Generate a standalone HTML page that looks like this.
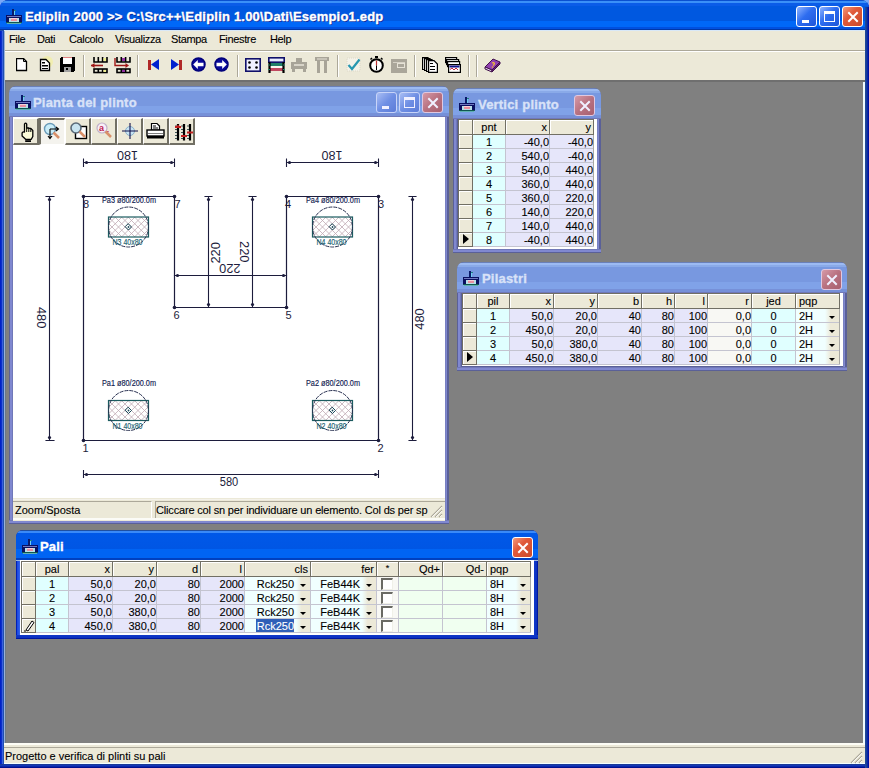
<!DOCTYPE html><html><head><meta charset="utf-8"><style>
html,body{margin:0;padding:0}
div{-webkit-text-stroke:0.1px currentColor}
body{width:869px;height:768px;overflow:hidden;position:relative;background:#7aa8f8;font-family:'Liberation Sans', sans-serif}
</style></head><body>
<div style="position:absolute;left:0px;top:0px;width:869px;height:768px;background:linear-gradient(90deg,#0020c8 0px,#0020c8 1px,#0a30c8 1px,#0a30c8 2px,#3a60e0 2px,#3a60e0 3px,#2050b0 3px,#2050b0 4px,#98b0d8 4px,#98b0d8 5px,#204898 5px,#204898 865px,#183c98 866px,#0828a8 867px,#0010a0 868px);border-radius:8px 8px 0 0"></div>
<div style="position:absolute;left:0px;top:764px;width:869px;height:4px;background:linear-gradient(#1a3a98 0px,#1a3a98 1px,#1438b8 1px,#1438b8 2px,#0a28a8 2px,#0a28a8 3px,#001090 3px)"></div>
<div style="position:absolute;left:0px;top:0px;width:869px;height:31px;background:linear-gradient(#0a50d0 0px,#0a50d0 1px,#3a90f8 1px,#3a90f8 3px,#0a5ce8 3px,#0a5ce8 6px,#0058e0 6px,#0058e0 21px,#0068f8 21px,#0068f8 27px,#0050e0 27px,#0050e0 29px,#0038a8 29px,#0038a8 30px,#2050b0 30px);border-radius:8px 8px 0 0"></div>
<div style="position:absolute;left:865px;top:7px;width:4px;height:761px;background:linear-gradient(90deg,#204898 0px,#204898 1px,#183c98 1px,#183c98 2px,#0828a8 2px,#0828a8 3px,#0010a0 3px)"></div>
<div style="position:absolute;left:4px;top:30px;width:861px;height:1px;background:#d8e8f8"></div>
<svg style="position:absolute;left:6px;top:9px" width="16" height="15" viewBox="0 0 16 15" shape-rendering="crispEdges">
<rect x="6" y="0" width="2" height="6" fill="#0a1a6a"/><rect x="8" y="1" width="1" height="5" fill="#70d0f0"/><rect x="8" y="1" width="2" height="1" fill="#208080"/>
<rect x="0" y="6" width="16" height="3" fill="#0a1060"/><rect x="1" y="7" width="14" height="1" fill="#7078c0"/>
<rect x="0" y="9" width="3" height="5" fill="#0a1060"/><rect x="13" y="9" width="3" height="5" fill="#0a1060"/>
<rect x="3" y="9" width="10" height="4" fill="#b8e0e8"/><rect x="5" y="9" width="6" height="3" fill="#e890a0"/><rect x="5" y="9" width="6" height="1" fill="#f8d0d8"/>
<rect x="0" y="13" width="16" height="1" fill="#105850"/><rect x="1" y="14" width="14" height="1" fill="#60b0b0"/>
</svg>
<div style="position:absolute;left:25px;top:8px;white-space:nowrap;font:bold 13px 'Liberation Sans', sans-serif;color:#fff;line-height:18px;letter-spacing:0.2px;-webkit-text-stroke:0.35px #fff;text-shadow:1px 1px 0 #0a2a9a">Ediplin 2000 &gt;&gt; C:\Src++\Ediplin 1.00\Dati\Esempio1.edp</div>
<div style="position:absolute;left:796px;top:6px;width:19px;height:19px;border:1px solid #fff;border-radius:3px;background:linear-gradient(135deg,#8fb4ff 0%,#2e6df0 45%,#1e55d8 100%);overflow:hidden"><div style="position:absolute;left:5px;top:13px;width:7px;height:3px;background:#fff"></div></div>
<div style="position:absolute;left:819px;top:6px;width:19px;height:19px;border:1px solid #fff;border-radius:3px;background:linear-gradient(135deg,#8fb4ff 0%,#2e6df0 45%,#1e55d8 100%);overflow:hidden"><div style="position:absolute;left:4px;top:4px;width:9px;height:7px;border:1px solid #fff;border-top-width:3px"></div></div>
<div style="position:absolute;left:842px;top:6px;width:19px;height:19px;border:1px solid #fff;border-radius:3px;background:linear-gradient(135deg,#f39a7c 0%,#e0593a 40%,#c94a2b 100%);overflow:hidden"><svg style="position:absolute;left:0;top:0" width="21" height="21"><path d="M6 6 L14 14 M14 6 L6 14" stroke="#fff" stroke-width="2" stroke-linecap="square"/></svg></div>
<div style="position:absolute;left:4px;top:31px;width:861px;height:19px;background:#ece9d8"></div>
<div style="position:absolute;left:9px;top:32px;white-space:nowrap;font:11px 'Liberation Sans', sans-serif;color:#000;line-height:14px;letter-spacing:-0.35px">File</div>
<div style="position:absolute;left:37px;top:32px;white-space:nowrap;font:11px 'Liberation Sans', sans-serif;color:#000;line-height:14px;letter-spacing:-0.35px">Dati</div>
<div style="position:absolute;left:69px;top:32px;white-space:nowrap;font:11px 'Liberation Sans', sans-serif;color:#000;line-height:14px;letter-spacing:-0.35px">Calcolo</div>
<div style="position:absolute;left:115px;top:32px;white-space:nowrap;font:11px 'Liberation Sans', sans-serif;color:#000;line-height:14px;letter-spacing:-0.35px">Visualizza</div>
<div style="position:absolute;left:171px;top:32px;white-space:nowrap;font:11px 'Liberation Sans', sans-serif;color:#000;line-height:14px;letter-spacing:-0.35px">Stampa</div>
<div style="position:absolute;left:219px;top:32px;white-space:nowrap;font:11px 'Liberation Sans', sans-serif;color:#000;line-height:14px;letter-spacing:-0.35px">Finestre</div>
<div style="position:absolute;left:270px;top:32px;white-space:nowrap;font:11px 'Liberation Sans', sans-serif;color:#000;line-height:14px;letter-spacing:-0.35px">Help</div>
<div style="position:absolute;left:4px;top:50px;width:861px;height:1px;background:#aca899"></div>
<div style="position:absolute;left:4px;top:51px;width:861px;height:1px;background:#fff"></div>
<div style="position:absolute;left:4px;top:52px;width:861px;height:28px;background:#ece9d8"></div>
<svg style="position:absolute;left:16px;top:58px" width="12" height="14" viewBox="0 0 12 14"><path d="M0.5 0.5 H7.5 L10.5 3.5 V12.5 H0.5 Z" fill="#fff" stroke="#000" stroke-width="1.3"/><path d="M7.5 0.5 V3.5 H10.5" fill="none" stroke="#000"/></svg>
<svg style="position:absolute;left:36px;top:56px" width="18" height="18" viewBox="0 0 18 18"><circle cx="11" cy="6" r="6" fill="#f4f0a0" opacity="0.7"/><path d="M4.5 3.5 H10 L13.5 7 V14.5 H4.5 Z" fill="#fff" stroke="#000" stroke-width="1.3"/><rect x="6" y="6" width="3" height="1.5" fill="#000"/><rect x="6" y="9" width="6" height="1.5" fill="#000"/><rect x="6" y="12" width="6" height="1" fill="#000"/></svg>
<svg style="position:absolute;left:60px;top:57px" width="15" height="15" viewBox="0 0 15 15" shape-rendering="crispEdges"><rect x="0" y="0" width="15" height="15" rx="2" fill="#000"/><rect x="3" y="0" width="9" height="1" fill="#e08080"/><rect x="3" y="1" width="9" height="6" fill="#fff"/><rect x="4" y="10" width="7" height="5" fill="#a0a0a0"/><rect x="6" y="11" width="2" height="2" fill="#000"/></svg>
<div style="position:absolute;left:83px;top:55px;width:1px;height:22px;background:#aca899"></div><div style="position:absolute;left:84px;top:55px;width:1px;height:22px;background:#fff"></div>
<svg style="position:absolute;left:91px;top:57px" width="17" height="17" viewBox="0 0 17 17"><g fill="none" stroke="#000" stroke-width="1.6"><path d="M3 0 V5 H16 V0 M7.3 0 V5 M11.6 0 V5"/><rect x="3" y="12" width="13" height="3.5"/><path d="M7.3 12 V15.5 M11.6 12 V15.5"/></g><rect x="12.5" y="1" width="2.5" height="3" fill="#f0f090"/><rect x="12.5" y="13" width="2.5" height="2" fill="#f0f090"/><path d="M0 8.5 H12" stroke="#a01818" stroke-width="1.6"/><path d="M0 8.5 L3.5 6 V11 Z" fill="#a01818"/></svg>
<svg style="position:absolute;left:114px;top:57px" width="17" height="17" viewBox="0 0 17 17"><g fill="none" stroke="#000" stroke-width="1.6"><path d="M3 0 V5 H16 V0 M7.3 0 V5 M11.6 0 V5"/><rect x="3" y="12" width="13" height="3.5"/><path d="M7.3 12 V15.5 M11.6 12 V15.5"/></g><rect x="8" y="1" width="3" height="3" fill="#9030a0"/><rect x="8" y="13" width="3" height="2" fill="#9030a0"/><path d="M1 1 V8.5 H12" stroke="#a01818" stroke-width="1.4" fill="none"/><path d="M15 8.5 L11.5 6 V11 Z" fill="#a01818"/></svg>
<div style="position:absolute;left:137px;top:55px;width:1px;height:22px;background:#aca899"></div><div style="position:absolute;left:138px;top:55px;width:1px;height:22px;background:#fff"></div>
<svg style="position:absolute;left:148px;top:59px" width="12" height="12" viewBox="0 0 12 12"><rect x="0" y="1" width="3" height="10" fill="#b02828"/><path d="M3 5.5 L11 0 V11 Z" fill="#0020d0"/></svg>
<svg style="position:absolute;left:171px;top:59px" width="12" height="12" viewBox="0 0 12 12"><rect x="8" y="1" width="3" height="10" fill="#b02828"/><path d="M8 5.5 L0 0 V11 Z" fill="#0020d0"/></svg>
<svg style="position:absolute;left:191px;top:57px" width="15" height="15" viewBox="0 0 15 15"><circle cx="7.5" cy="7.5" r="6.5" fill="#0a0a9a" stroke="#00007a" stroke-width="1.5"/><path d="M2.2 7.5 L6.8 3 V5.8 H12.5 V9.2 H6.8 V12 Z" fill="#fff"/></svg>
<svg style="position:absolute;left:214px;top:57px" width="15" height="15" viewBox="0 0 15 15"><circle cx="7.5" cy="7.5" r="6.5" fill="#0a0a9a" stroke="#00007a" stroke-width="1.5"/><path d="M12.8 7.5 L8.2 3 V5.8 H2.5 V9.2 H8.2 V12 Z" fill="#fff"/></svg>
<div style="position:absolute;left:237px;top:55px;width:1px;height:22px;background:#aca899"></div><div style="position:absolute;left:238px;top:55px;width:1px;height:22px;background:#fff"></div>
<svg style="position:absolute;left:245px;top:58px" width="16" height="14" viewBox="0 0 16 14"><rect x="0.8" y="0.8" width="14.4" height="12.4" fill="#f0f0ff" stroke="#10106a" stroke-width="1.6"/><circle cx="4.5" cy="4.5" r="1.3" fill="#000"/><circle cx="11.5" cy="4.5" r="1.3" fill="#000"/><circle cx="4.5" cy="9.5" r="1.3" fill="#000"/><circle cx="11.5" cy="9.5" r="1.3" fill="#000"/></svg>
<svg style="position:absolute;left:268px;top:57px" width="17" height="16" viewBox="0 0 17 16"><rect x="2" y="6" width="13" height="3" fill="#208068"/><rect x="2" y="11" width="13" height="3" fill="#c04860"/><rect x="2" y="9" width="13" height="2" fill="#f8f8f0"/><rect x="0.8" y="0.8" width="15.4" height="4.4" fill="#e8ecff" stroke="#10106a" stroke-width="1.6"/><path d="M1.5 5 V16 M15.5 5 V16" stroke="#000" stroke-width="2.2"/><path d="M0 8 H2 M15 8 H17 M0 12.5 H2 M15 12.5 H17" stroke="#208068" stroke-width="1"/></svg>
<svg style="position:absolute;left:291px;top:58px" width="16" height="14" viewBox="0 0 16 14" shape-rendering="crispEdges"><g fill="#a8a498"><rect x="5" y="0" width="6" height="4"/><rect x="0" y="4" width="16" height="7" rx="1"/><rect x="1" y="10" width="3" height="4"/><rect x="12" y="10" width="3" height="4"/></g><rect x="3" y="6" width="10" height="2" fill="#d8d4c8"/></svg>
<svg style="position:absolute;left:315px;top:57px" width="14" height="16" viewBox="0 0 14 16" shape-rendering="crispEdges"><g fill="#a8a498"><rect x="0" y="0" width="14" height="4"/><rect x="2" y="4" width="3" height="12"/><rect x="9" y="4" width="3" height="12"/></g><rect x="2" y="1" width="10" height="2" fill="#c8c4b8"/></svg>
<div style="position:absolute;left:337px;top:55px;width:1px;height:22px;background:#aca899"></div><div style="position:absolute;left:338px;top:55px;width:1px;height:22px;background:#fff"></div>
<svg style="position:absolute;left:346px;top:57px" width="15" height="15" viewBox="0 0 15 15"><rect x="1" y="1" width="13" height="13" fill="#f4f2e8" stroke="#dcd8c8" stroke-dasharray="1 1"/><path d="M2.5 8 L6 12 L13.5 2.5" fill="none" stroke="#2898b0" stroke-width="2.2"/></svg>
<svg style="position:absolute;left:368px;top:56px" width="17" height="17" viewBox="0 0 17 17"><rect x="7" y="0" width="3" height="2" fill="#000"/><path d="M2.5 3.5 L4 2 M14.5 3.5 L13 2" stroke="#000" stroke-width="1.5"/><circle cx="8.5" cy="9.5" r="6.3" fill="#fff" stroke="#000" stroke-width="2"/><path d="M8.5 9.5 V4.5" stroke="#c03030" stroke-width="1.2"/><path d="M8.5 9.5 V14" stroke="#000" stroke-width="1"/></svg>
<svg style="position:absolute;left:391px;top:59px" width="16" height="14" viewBox="0 0 16 14" shape-rendering="crispEdges"><rect x="0" y="0" width="16" height="14" fill="#aaa69a"/><rect x="6" y="4" width="8" height="5" fill="#e6e2d6"/><rect x="7" y="5" width="6" height="3" fill="#aaa69a"/><rect x="2" y="3" width="12" height="1" fill="#d6d2c6"/></svg>
<div style="position:absolute;left:414px;top:55px;width:1px;height:22px;background:#aca899"></div><div style="position:absolute;left:415px;top:55px;width:1px;height:22px;background:#fff"></div>
<svg style="position:absolute;left:422px;top:57px" width="16" height="16" viewBox="0 0 16 16"><g stroke="#000" stroke-width="1.2" fill="#fff"><path d="M0.6 0.6 H6 V12.5 H0.6 Z"/><path d="M2.6 1.6 H8 V13.5 H2.6 Z"/><path d="M4.6 2.6 H10 V14.5 H4.6 Z"/><path d="M6.6 3.6 H12 L15.4 7 V15.4 H6.6 Z"/></g><rect x="8" y="6" width="3" height="1" fill="#000"/><rect x="8" y="9" width="5" height="1" fill="#000"/><rect x="8" y="12" width="5" height="1" fill="#000"/></svg>
<svg style="position:absolute;left:445px;top:57px" width="16" height="16" viewBox="0 0 16 16"><g stroke="#000" stroke-width="1.2" fill="#fff"><rect x="0.6" y="0.6" width="11" height="5"/><rect x="1.6" y="2.6" width="12" height="5"/><rect x="2.6" y="4.6" width="12" height="5"/><rect x="3.6" y="7.6" width="11.8" height="7.8"/></g><rect x="4.5" y="8.5" width="10" height="2" fill="#10108a"/><path d="M5 12.5 L7 11 L9 13 L11 11 L13 13" stroke="#c02040" stroke-width="1" fill="none"/></svg>
<div style="position:absolute;left:468px;top:55px;width:1px;height:22px;background:#aca899"></div><div style="position:absolute;left:469px;top:55px;width:1px;height:22px;background:#fff"></div>
<div style="position:absolute;left:476px;top:55px;width:1px;height:22px;background:#aca899"></div><div style="position:absolute;left:477px;top:55px;width:1px;height:22px;background:#fff"></div>
<svg style="position:absolute;left:484px;top:57px" width="17" height="16" viewBox="0 0 17 16"><path d="M1 10 L9 2 L16 5 L8 13 Z" fill="#9040b0" stroke="#40104a" stroke-width="1"/><path d="M1 10 L8 13 L8 15 L1 12 Z" fill="#e8d8f0" stroke="#40104a" stroke-width="1"/><path d="M8 13 L16 5 V7 L8 15 Z" fill="#6a2080" stroke="#40104a" stroke-width="1"/><path d="M8 6 Q10 5 10.5 6.5 Q10 8 9 8.5" stroke="#f0c030" stroke-width="1.2" fill="none"/><circle cx="8.5" cy="10" r="0.8" fill="#f0c030"/></svg>
<div style="position:absolute;left:4px;top:80px;width:861px;height:665px;background:#808080"></div>
<div style="position:absolute;left:4px;top:80px;width:861px;height:2px;background:#6f6f6f"></div>
<div style="position:absolute;left:4px;top:31px;width:1px;height:733px;background:#98b0d8"></div>
<div style="position:absolute;left:5px;top:82px;width:1px;height:661px;background:#6a7888"></div>
<div style="position:absolute;left:863px;top:82px;width:2px;height:682px;background:#f0fcff"></div>
<div style="position:absolute;left:4px;top:743px;width:861px;height:2px;background:#fdfdf6"></div>
<div style="position:absolute;left:4px;top:745px;width:861px;height:19px;background:#ece9d8"></div>
<div style="position:absolute;left:4px;top:747px;width:861px;height:1px;background:#aca899"></div>
<div style="position:absolute;left:4px;top:763px;width:861px;height:1px;background:#f4ffff"></div>
<svg style="position:absolute;left:850px;top:751px" width="13" height="13"><path d="M12 1 L1 12 M12 5 L5 12 M12 9 L9 12" stroke="#aca899" stroke-width="1.2"/><path d="M12 2 L2 12 M12 6 L6 12 M12 10 L10 12" stroke="#fff" stroke-width="0.8"/></svg>
<div style="position:absolute;left:5px;top:749px;white-space:nowrap;font:11px 'Liberation Sans', sans-serif;color:#000;line-height:14px;letter-spacing:-0.01px">Progetto e verifica di plinti su pali</div>
<div style="position:absolute;left:9px;top:86px;width:440px;height:438px;background:#5a6098;border-radius:7px 7px 0 0"></div>
<div style="position:absolute;left:9px;top:117px;width:4px;height:407px;background:linear-gradient(90deg,#5a6098 0px,#5a6098 1px,#8088d0 1px,#8088d0 3px,#7078b8 3px)"></div>
<div style="position:absolute;left:445px;top:117px;width:4px;height:407px;background:linear-gradient(270deg,#5a6098 0px,#5a6098 2px,#8088d0 2px,#8088d0 3px,#7880c0 3px)"></div>
<div style="position:absolute;left:9px;top:520px;width:440px;height:4px;background:linear-gradient(0deg,#5a6098 0px,#5a6098 1px,#8088d0 1px,#8088d0 3px,#7078b8 3px)"></div>
<div style="position:absolute;left:9px;top:86px;width:440px;height:31px;background:linear-gradient(#6a80b8 0px,#6a80b8 1px,#9cbaf2 1px,#9cbaf2 3px,#8aaae8 3px,#8aaae8 5px,#7898e0 5px,#7898e0 20px,#80a2e8 20px,#80a2e8 27px,#7690d8 27px,#7690d8 30px,#7078b8 30px,#7078b8 31px);border-radius:7px 7px 0 0"></div>
<svg style="position:absolute;left:15px;top:95px" width="16" height="15" viewBox="0 0 16 15" shape-rendering="crispEdges">
<rect x="6" y="0" width="2" height="6" fill="#0a1a6a"/><rect x="8" y="1" width="1" height="5" fill="#70d0f0"/><rect x="8" y="1" width="2" height="1" fill="#208080"/>
<rect x="0" y="6" width="16" height="3" fill="#0a1060"/><rect x="1" y="7" width="14" height="1" fill="#7078c0"/>
<rect x="0" y="9" width="3" height="5" fill="#0a1060"/><rect x="13" y="9" width="3" height="5" fill="#0a1060"/>
<rect x="3" y="9" width="10" height="4" fill="#b8e0e8"/><rect x="5" y="9" width="6" height="3" fill="#e890a0"/><rect x="5" y="9" width="6" height="1" fill="#f8d0d8"/>
<rect x="0" y="13" width="16" height="1" fill="#105850"/><rect x="1" y="14" width="14" height="1" fill="#60b0b0"/>
</svg>
<div style="position:absolute;left:33px;top:94px;white-space:nowrap;font:bold 13px 'Liberation Sans', sans-serif;color:#d8e2f8;line-height:18px;-webkit-text-stroke:0.35px #d8e2f8;letter-spacing:0.2px">Pianta del plinto</div>
<div style="position:absolute;left:422px;top:92px;width:19px;height:19px;border:1px solid #e0c8e0;border-radius:3px;background:linear-gradient(135deg,#d69aa8 0%,#b87180 50%,#a86070 100%);overflow:hidden"><svg style="position:absolute;left:0;top:0" width="21" height="21"><path d="M6 6 L14 14 M14 6 L6 14" stroke="#f0f0ff" stroke-width="2" stroke-linecap="square"/></svg></div>
<div style="position:absolute;left:399px;top:92px;width:19px;height:19px;border:1px solid #c8d4f8;border-radius:3px;background:linear-gradient(135deg,#a8bdf4 0%,#6f8fe4 50%,#5c7cd8 100%);overflow:hidden"><div style="position:absolute;left:4px;top:4px;width:9px;height:7px;border:1px solid #f0f0ff;border-top-width:3px"></div></div>
<div style="position:absolute;left:376px;top:92px;width:19px;height:19px;border:1px solid #c8d4f8;border-radius:3px;background:linear-gradient(135deg,#a8bdf4 0%,#6f8fe4 50%,#5c7cd8 100%);overflow:hidden"><div style="position:absolute;left:5px;top:13px;width:7px;height:3px;background:#f0f0ff"></div></div>
<div style="position:absolute;left:13px;top:117px;width:432px;height:404px;background:#ece9d8"></div>
<div style="position:absolute;left:13px;top:117px;width:432px;height:381px;background:#fff"></div>
<div style="position:absolute;left:13px;top:118px;width:26px;height:27px;box-sizing:border-box;background:#ece9d8;border-top:1px solid #fff;border-left:1px solid #fff;border-right:2px solid #716f64;border-bottom:2px solid #716f64"></div>
<div style="position:absolute;left:39px;top:118px;width:26px;height:27px;box-sizing:border-box;background:#f4f3ee;border-top:2px solid #716f64;border-left:2px solid #716f64;border-right:1px solid #fff;border-bottom:1px solid #fff"></div>
<div style="position:absolute;left:65px;top:118px;width:26px;height:27px;box-sizing:border-box;background:#ece9d8;border-top:1px solid #fff;border-left:1px solid #fff;border-right:2px solid #716f64;border-bottom:2px solid #716f64"></div>
<div style="position:absolute;left:91px;top:118px;width:26px;height:27px;box-sizing:border-box;background:#ece9d8;border-top:1px solid #fff;border-left:1px solid #fff;border-right:2px solid #716f64;border-bottom:2px solid #716f64"></div>
<div style="position:absolute;left:117px;top:118px;width:26px;height:27px;box-sizing:border-box;background:#ece9d8;border-top:1px solid #fff;border-left:1px solid #fff;border-right:2px solid #716f64;border-bottom:2px solid #716f64"></div>
<div style="position:absolute;left:143px;top:118px;width:26px;height:27px;box-sizing:border-box;background:#ece9d8;border-top:1px solid #fff;border-left:1px solid #fff;border-right:2px solid #716f64;border-bottom:2px solid #716f64"></div>
<div style="position:absolute;left:169px;top:118px;width:26px;height:27px;box-sizing:border-box;background:#ece9d8;border-top:1px solid #fff;border-left:1px solid #fff;border-right:2px solid #716f64;border-bottom:2px solid #716f64"></div>
<svg style="position:absolute;left:20px;top:121px" width="15" height="22" viewBox="0 0 15 22"><path d="M4.5 11 V3 Q5.6 1.2 6.7 3 V7 H8.8 V7.4 H10.8 L12.8 9.5 V15.5 L11.3 18.3 H5.6 L2.1 15 V11.8 Q3 10.6 4.5 11 Z" fill="#fbfbd8" stroke="#000" stroke-width="1.3" stroke-linejoin="round"/><path d="M6.7 7 V11 M8.8 7.4 V11 M10.8 7.6 V11" stroke="#000" stroke-width="1"/><rect x="5.2" y="19.2" width="5.8" height="1.8" fill="#000"/></svg>
<svg style="position:absolute;left:43px;top:122px" width="20" height="20" viewBox="0 0 20 20"><circle cx="7" cy="7" r="5.5" fill="#c8ecf8" stroke="#6a9ab8" stroke-width="1.4"/><path d="M10.5 10.5 L16 16" stroke="#d8906a" stroke-width="2.5"/><path d="M7 7 H15 M13 5 L15.5 7 L13 9" stroke="#000" stroke-width="1.1" fill="none"/><path d="M7 7 V16 M5 14 L7 16.5 L9 14" stroke="#000" stroke-width="1.1" fill="none"/></svg>
<svg style="position:absolute;left:70px;top:122px" width="18" height="18" viewBox="0 0 18 18"><rect x="5.5" y="4.5" width="11" height="12" fill="#fff" stroke="#000" stroke-width="1.4"/><circle cx="6" cy="6" r="5" fill="#c8e4f0" stroke="#5a6a78" stroke-width="1.6"/><path d="M9.5 9.5 L15 15" stroke="#d8906a" stroke-width="2.5"/></svg>
<svg style="position:absolute;left:96px;top:122px" width="18" height="18" viewBox="0 0 18 18"><circle cx="6" cy="6" r="5" fill="#f8f0f8" stroke="#c0b0c8" stroke-width="1.2"/><text x="3" y="9" font-family="Liberation Sans" font-size="9" font-weight="bold" fill="#c02050">a</text><text x="10" y="12" font-family="Liberation Sans" font-size="6" font-weight="bold" fill="#c02050">z</text><path d="M9.5 9.5 L15 15" stroke="#d8906a" stroke-width="2.5"/></svg>
<svg style="position:absolute;left:121px;top:122px" width="18" height="18" viewBox="0 0 18 18"><circle cx="9" cy="9" r="4.5" fill="#c8e4f4" stroke="#8ab0c8" stroke-width="1"/><path d="M9 1 V17 M1 9 H17" stroke="#10104a" stroke-width="1.1"/></svg>
<svg style="position:absolute;left:146px;top:122px" width="20" height="18" viewBox="0 0 20 18"><path d="M5.5 1.5 H11 L13.5 4 V8 H5.5 Z" fill="#fff" stroke="#000" stroke-width="1.2"/><path d="M7 4 H10 M7 6 H12" stroke="#000"/><rect x="1" y="8" width="17" height="6" fill="#fff" stroke="#000" stroke-width="1.4"/><rect x="2" y="11" width="15" height="1" fill="#808080"/><rect x="1" y="14" width="17" height="2.5" fill="#000"/></svg>
<svg style="position:absolute;left:171px;top:121px" width="24" height="22" viewBox="0 0 24 22"><path d="M4 5 H6 M4 8.5 H6 M4 11.5 H6 M4 14.5 H6 M4 17.5 H6 M10 5 H12 M10 8.5 H12 M10 11.5 H12 M10 14.5 H12 M10 17.5 H12 M16 5 H18 M16 8.5 H18 M16 11.5 H18 M16 14.5 H18 M16 17.5 H18" stroke="#405858" stroke-width="1"/><path d="M7 3 V19.5 M13 3 V19.5 M19 3 V19.5" stroke="#000" stroke-width="2.2"/><path d="M4 6 H10 M10 15 H16 M16 11.5 H22" stroke="#c02020" stroke-width="2"/><path d="M7 3.5 L5 6 H9 Z" fill="#c02020"/></svg>
<div style="position:absolute;left:13px;top:498px;width:432px;height:22px;background:#ece9d8"></div>
<div style="position:absolute;left:13px;top:499px;width:432px;height:1px;background:#f4f2ea"></div>
<div style="position:absolute;left:13px;top:501px;width:139px;height:17px;border-top:1px solid #aca899;border-left:0;border-right:1px solid #fff;box-sizing:border-box"></div>
<div style="position:absolute;left:155px;top:501px;width:290px;height:17px;border-top:1px solid #aca899;border-left:1px solid #aca899;box-sizing:border-box"></div>
<div style="position:absolute;left:13px;top:518px;width:432px;height:2px;background:#fbfbf6"></div>
<div style="position:absolute;left:15px;top:503px;white-space:nowrap;font:11px 'Liberation Sans', sans-serif;color:#000;line-height:14px">Zoom/Sposta</div>
<div style="position:absolute;left:156px;top:503px;white-space:nowrap;font:11px 'Liberation Sans', sans-serif;color:#000;line-height:14px;letter-spacing:-0.17px">Cliccare col sn per individuare un elemento. Col ds per sp</div>
<svg style="position:absolute;left:430px;top:505px" width="13" height="13"><path d="M12 1 L1 12 M12 5 L5 12 M12 9 L9 12" stroke="#aca899" stroke-width="1.2"/><path d="M12 2 L2 12 M12 6 L6 12 M12 10 L10 12" stroke="#fff" stroke-width="0.8"/></svg>
<svg style="position:absolute;left:13px;top:145px" width="432" height="353" viewBox="13 145 432 353">
<g stroke-linecap="square">
<clipPath id="c128227"><rect x="108.5" y="217" width="40" height="20"/></clipPath>
<path d="M82.5 217 L102.5 237 M102.5 217 L82.5 237 M89.0 217 L109.0 237 M109.0 217 L89.0 237 M95.5 217 L115.5 237 M115.5 217 L95.5 237 M102.0 217 L122.0 237 M122.0 217 L102.0 237 M108.5 217 L128.5 237 M128.5 217 L108.5 237 M115.0 217 L135.0 237 M135.0 217 L115.0 237 M121.5 217 L141.5 237 M141.5 217 L121.5 237 M128.0 217 L148.0 237 M148.0 217 L128.0 237 M134.5 217 L154.5 237 M154.5 217 L134.5 237 M141.0 217 L161.0 237 M161.0 217 L141.0 237 M147.5 217 L167.5 237 M167.5 217 L147.5 237 M154.0 217 L174.0 237 M174.0 217 L154.0 237 M160.5 217 L180.5 237 M180.5 217 L160.5 237 M167.0 217 L187.0 237 M187.0 217 L167.0 237 M173.5 217 L193.5 237 M193.5 217 L173.5 237 M180.0 217 L200.0 237 M200.0 217 L180.0 237" stroke="#c0aab4" stroke-width="0.8" clip-path="url(#c128227)" fill="none"/>
<rect x="108.5" y="217" width="40" height="20" fill="none" stroke="#1c5c60" stroke-width="1.2"/>
<circle cx="128.5" cy="227" r="20" fill="none" stroke="#283050" stroke-width="1" stroke-dasharray="3 2"/>
<path d="M128.5 224 L131.5 227 L128.5 230 L125.5 227 Z" fill="none" stroke="#1c4a5a" stroke-width="1"/><circle cx="128.5" cy="227" r="0.9" fill="#1c4a5a"/>
<text x="129.0" y="202.5" text-anchor="middle" font-family="Liberation Sans" font-size="8.5" fill="#102050" stroke="#102050" stroke-width="0.15" textLength="54" lengthAdjust="spacingAndGlyphs">Pa3 ø80/200.0m</text>
<text x="127.5" y="245" text-anchor="middle" font-family="Liberation Sans" font-size="8.5" fill="#186070" stroke="#186070" stroke-width="0.15" textLength="30" lengthAdjust="spacingAndGlyphs">N3 40x80</text>
<clipPath id="c332227"><rect x="312.5" y="217" width="40" height="20"/></clipPath>
<path d="M286.5 217 L306.5 237 M306.5 217 L286.5 237 M293.0 217 L313.0 237 M313.0 217 L293.0 237 M299.5 217 L319.5 237 M319.5 217 L299.5 237 M306.0 217 L326.0 237 M326.0 217 L306.0 237 M312.5 217 L332.5 237 M332.5 217 L312.5 237 M319.0 217 L339.0 237 M339.0 217 L319.0 237 M325.5 217 L345.5 237 M345.5 217 L325.5 237 M332.0 217 L352.0 237 M352.0 217 L332.0 237 M338.5 217 L358.5 237 M358.5 217 L338.5 237 M345.0 217 L365.0 237 M365.0 217 L345.0 237 M351.5 217 L371.5 237 M371.5 217 L351.5 237 M358.0 217 L378.0 237 M378.0 217 L358.0 237 M364.5 217 L384.5 237 M384.5 217 L364.5 237 M371.0 217 L391.0 237 M391.0 217 L371.0 237 M377.5 217 L397.5 237 M397.5 217 L377.5 237 M384.0 217 L404.0 237 M404.0 217 L384.0 237" stroke="#c0aab4" stroke-width="0.8" clip-path="url(#c332227)" fill="none"/>
<rect x="312.5" y="217" width="40" height="20" fill="none" stroke="#1c5c60" stroke-width="1.2"/>
<circle cx="332.5" cy="227" r="20" fill="none" stroke="#283050" stroke-width="1" stroke-dasharray="3 2"/>
<path d="M332.5 224 L335.5 227 L332.5 230 L329.5 227 Z" fill="none" stroke="#1c4a5a" stroke-width="1"/><circle cx="332.5" cy="227" r="0.9" fill="#1c4a5a"/>
<text x="333.0" y="202.5" text-anchor="middle" font-family="Liberation Sans" font-size="8.5" fill="#102050" stroke="#102050" stroke-width="0.15" textLength="54" lengthAdjust="spacingAndGlyphs">Pa4 ø80/200.0m</text>
<text x="331.5" y="245" text-anchor="middle" font-family="Liberation Sans" font-size="8.5" fill="#186070" stroke="#186070" stroke-width="0.15" textLength="30" lengthAdjust="spacingAndGlyphs">N4 40x80</text>
<clipPath id="c128410"><rect x="108.5" y="400.5" width="40" height="20"/></clipPath>
<path d="M82.5 400.5 L102.5 420.5 M102.5 400.5 L82.5 420.5 M89.0 400.5 L109.0 420.5 M109.0 400.5 L89.0 420.5 M95.5 400.5 L115.5 420.5 M115.5 400.5 L95.5 420.5 M102.0 400.5 L122.0 420.5 M122.0 400.5 L102.0 420.5 M108.5 400.5 L128.5 420.5 M128.5 400.5 L108.5 420.5 M115.0 400.5 L135.0 420.5 M135.0 400.5 L115.0 420.5 M121.5 400.5 L141.5 420.5 M141.5 400.5 L121.5 420.5 M128.0 400.5 L148.0 420.5 M148.0 400.5 L128.0 420.5 M134.5 400.5 L154.5 420.5 M154.5 400.5 L134.5 420.5 M141.0 400.5 L161.0 420.5 M161.0 400.5 L141.0 420.5 M147.5 400.5 L167.5 420.5 M167.5 400.5 L147.5 420.5 M154.0 400.5 L174.0 420.5 M174.0 400.5 L154.0 420.5 M160.5 400.5 L180.5 420.5 M180.5 400.5 L160.5 420.5 M167.0 400.5 L187.0 420.5 M187.0 400.5 L167.0 420.5 M173.5 400.5 L193.5 420.5 M193.5 400.5 L173.5 420.5 M180.0 400.5 L200.0 420.5 M200.0 400.5 L180.0 420.5" stroke="#c0aab4" stroke-width="0.8" clip-path="url(#c128410)" fill="none"/>
<rect x="108.5" y="400.5" width="40" height="20" fill="none" stroke="#1c5c60" stroke-width="1.2"/>
<circle cx="128.5" cy="410.5" r="20" fill="none" stroke="#283050" stroke-width="1" stroke-dasharray="3 2"/>
<path d="M128.5 407.5 L131.5 410.5 L128.5 413.5 L125.5 410.5 Z" fill="none" stroke="#1c4a5a" stroke-width="1"/><circle cx="128.5" cy="410.5" r="0.9" fill="#1c4a5a"/>
<text x="129.0" y="386.0" text-anchor="middle" font-family="Liberation Sans" font-size="8.5" fill="#102050" stroke="#102050" stroke-width="0.15" textLength="54" lengthAdjust="spacingAndGlyphs">Pa1 ø80/200.0m</text>
<text x="127.5" y="428.5" text-anchor="middle" font-family="Liberation Sans" font-size="8.5" fill="#186070" stroke="#186070" stroke-width="0.15" textLength="30" lengthAdjust="spacingAndGlyphs">N1 40x80</text>
<clipPath id="c332410"><rect x="312.5" y="400.5" width="40" height="20"/></clipPath>
<path d="M286.5 400.5 L306.5 420.5 M306.5 400.5 L286.5 420.5 M293.0 400.5 L313.0 420.5 M313.0 400.5 L293.0 420.5 M299.5 400.5 L319.5 420.5 M319.5 400.5 L299.5 420.5 M306.0 400.5 L326.0 420.5 M326.0 400.5 L306.0 420.5 M312.5 400.5 L332.5 420.5 M332.5 400.5 L312.5 420.5 M319.0 400.5 L339.0 420.5 M339.0 400.5 L319.0 420.5 M325.5 400.5 L345.5 420.5 M345.5 400.5 L325.5 420.5 M332.0 400.5 L352.0 420.5 M352.0 400.5 L332.0 420.5 M338.5 400.5 L358.5 420.5 M358.5 400.5 L338.5 420.5 M345.0 400.5 L365.0 420.5 M365.0 400.5 L345.0 420.5 M351.5 400.5 L371.5 420.5 M371.5 400.5 L351.5 420.5 M358.0 400.5 L378.0 420.5 M378.0 400.5 L358.0 420.5 M364.5 400.5 L384.5 420.5 M384.5 400.5 L364.5 420.5 M371.0 400.5 L391.0 420.5 M391.0 400.5 L371.0 420.5 M377.5 400.5 L397.5 420.5 M397.5 400.5 L377.5 420.5 M384.0 400.5 L404.0 420.5 M404.0 400.5 L384.0 420.5" stroke="#c0aab4" stroke-width="0.8" clip-path="url(#c332410)" fill="none"/>
<rect x="312.5" y="400.5" width="40" height="20" fill="none" stroke="#1c5c60" stroke-width="1.2"/>
<circle cx="332.5" cy="410.5" r="20" fill="none" stroke="#283050" stroke-width="1" stroke-dasharray="3 2"/>
<path d="M332.5 407.5 L335.5 410.5 L332.5 413.5 L329.5 410.5 Z" fill="none" stroke="#1c4a5a" stroke-width="1"/><circle cx="332.5" cy="410.5" r="0.9" fill="#1c4a5a"/>
<text x="333.0" y="386.0" text-anchor="middle" font-family="Liberation Sans" font-size="8.5" fill="#102050" stroke="#102050" stroke-width="0.15" textLength="54" lengthAdjust="spacingAndGlyphs">Pa2 ø80/200.0m</text>
<text x="331.5" y="428.5" text-anchor="middle" font-family="Liberation Sans" font-size="8.5" fill="#186070" stroke="#186070" stroke-width="0.15" textLength="30" lengthAdjust="spacingAndGlyphs">N2 40x80</text>
<path d="M83.5 196.5 H174.5 V307.5 H286.5 V196.5 H378.5 V440.5 H83.5 Z" fill="none" stroke="#1c1c3c" stroke-width="1.2"/>
<circle cx="83.5" cy="196.5" r="1.8" fill="#1c1c3c"/>
<circle cx="174.5" cy="196.5" r="1.8" fill="#1c1c3c"/>
<circle cx="286.5" cy="196.5" r="1.8" fill="#1c1c3c"/>
<circle cx="378.5" cy="196.5" r="1.8" fill="#1c1c3c"/>
<circle cx="174.5" cy="307.5" r="1.8" fill="#1c1c3c"/>
<circle cx="286.5" cy="307.5" r="1.8" fill="#1c1c3c"/>
<circle cx="83.5" cy="440.5" r="1.8" fill="#1c1c3c"/>
<circle cx="378.5" cy="440.5" r="1.8" fill="#1c1c3c"/>
<text x="86" y="207.5" text-anchor="middle" font-family="Liberation Sans" font-size="11" fill="#1c1c3c">8</text>
<text x="177.5" y="207.5" text-anchor="middle" font-family="Liberation Sans" font-size="11" fill="#1c1c3c">7</text>
<text x="288" y="207.5" text-anchor="middle" font-family="Liberation Sans" font-size="11" fill="#1c1c3c">4</text>
<text x="381" y="207.5" text-anchor="middle" font-family="Liberation Sans" font-size="11" fill="#1c1c3c">3</text>
<text x="176.5" y="319" text-anchor="middle" font-family="Liberation Sans" font-size="11" fill="#1c1c3c">6</text>
<text x="288.5" y="319" text-anchor="middle" font-family="Liberation Sans" font-size="11" fill="#1c1c3c">5</text>
<text x="85.5" y="451.5" text-anchor="middle" font-family="Liberation Sans" font-size="11" fill="#1c1c3c">1</text>
<text x="380.5" y="451.5" text-anchor="middle" font-family="Liberation Sans" font-size="11" fill="#1c1c3c">2</text>
<path d="M83.5 162.5 H174.5 M83.5 159 V166.5 M174.5 159 V166.5 M286.5 162.5 H378.5 M286.5 159 V166.5 M378.5 159 V166.5 M49.5 196.5 V440.5 M46 196.5 H54 M46 440.5 H54 M412.5 196.5 V440.5 M409 196.5 H416 M409 440.5 H416 M208.5 196.5 V307.5 M205 196.5 H212 M252.5 196.5 V307.5 M249 196.5 H256 M174.5 275.5 H286.5 M83.5 474.5 H378.5 M83.5 470.5 V477.5 M378.5 470.5 V477.5" fill="none" stroke="#1c1c3c" stroke-width="1.1"/>
<circle cx="86.5" cy="162.5" r="1.6" fill="#1c1c3c"/>
<circle cx="171.5" cy="162.5" r="1.6" fill="#1c1c3c"/>
<circle cx="289.5" cy="162.5" r="1.6" fill="#1c1c3c"/>
<circle cx="375.5" cy="162.5" r="1.6" fill="#1c1c3c"/>
<circle cx="49.5" cy="199.5" r="1.6" fill="#1c1c3c"/>
<circle cx="49.5" cy="437.5" r="1.6" fill="#1c1c3c"/>
<circle cx="412.5" cy="199.5" r="1.6" fill="#1c1c3c"/>
<circle cx="412.5" cy="437.5" r="1.6" fill="#1c1c3c"/>
<circle cx="208.5" cy="199.5" r="1.6" fill="#1c1c3c"/>
<circle cx="208.5" cy="304.5" r="1.6" fill="#1c1c3c"/>
<circle cx="252.5" cy="199.5" r="1.6" fill="#1c1c3c"/>
<circle cx="252.5" cy="304.5" r="1.6" fill="#1c1c3c"/>
<circle cx="177.5" cy="275.5" r="1.6" fill="#1c1c3c"/>
<circle cx="283.5" cy="275.5" r="1.6" fill="#1c1c3c"/>
<circle cx="86.5" cy="474.5" r="1.6" fill="#1c1c3c"/>
<circle cx="375.5" cy="474.5" r="1.6" fill="#1c1c3c"/>
</g>
<text transform="translate(127.5,156.1) rotate(180)" x="0" y="4.65" text-anchor="middle" font-family="Liberation Sans" font-size="13" fill="#1c1c3c" textLength="21" lengthAdjust="spacingAndGlyphs">180</text>
<text transform="translate(332,156.1) rotate(180)" x="0" y="4.65" text-anchor="middle" font-family="Liberation Sans" font-size="13" fill="#1c1c3c" textLength="21" lengthAdjust="spacingAndGlyphs">180</text>
<text transform="translate(42,317.7) rotate(90)" x="0" y="4.83" text-anchor="middle" font-family="Liberation Sans" font-size="13.5" fill="#1c1c3c" textLength="21.5" lengthAdjust="spacingAndGlyphs">480</text>
<text transform="translate(419,319) rotate(-90)" x="0" y="4.83" text-anchor="middle" font-family="Liberation Sans" font-size="13.5" fill="#1c1c3c" textLength="21.5" lengthAdjust="spacingAndGlyphs">480</text>
<text transform="translate(215,252.8) rotate(-90)" x="0" y="4.65" text-anchor="middle" font-family="Liberation Sans" font-size="13" fill="#1c1c3c" textLength="21.5" lengthAdjust="spacingAndGlyphs">220</text>
<text transform="translate(245,251.8) rotate(90)" x="0" y="4.65" text-anchor="middle" font-family="Liberation Sans" font-size="13" fill="#1c1c3c" textLength="21.5" lengthAdjust="spacingAndGlyphs">220</text>
<text transform="translate(229.8,268.6) rotate(180)" x="0" y="4.65" text-anchor="middle" font-family="Liberation Sans" font-size="13" fill="#1c1c3c" textLength="21.5" lengthAdjust="spacingAndGlyphs">220</text>
<text transform="translate(229,481.5) rotate(0)" x="0" y="4.65" text-anchor="middle" font-family="Liberation Sans" font-size="13" fill="#1c1c3c" textLength="18.5" lengthAdjust="spacingAndGlyphs">580</text>
</svg>
<div style="position:absolute;left:453px;top:88px;width:148px;height:165px;background:#5a6098;border-radius:7px 7px 0 0"></div>
<div style="position:absolute;left:453px;top:119px;width:4px;height:134px;background:linear-gradient(90deg,#5a6098 0px,#5a6098 1px,#8088d0 1px,#8088d0 3px,#7078b8 3px)"></div>
<div style="position:absolute;left:597px;top:119px;width:4px;height:134px;background:linear-gradient(270deg,#5a6098 0px,#5a6098 2px,#8088d0 2px,#8088d0 3px,#7880c0 3px)"></div>
<div style="position:absolute;left:453px;top:249px;width:148px;height:4px;background:linear-gradient(0deg,#5a6098 0px,#5a6098 1px,#8088d0 1px,#8088d0 3px,#7078b8 3px)"></div>
<div style="position:absolute;left:453px;top:88px;width:148px;height:31px;background:linear-gradient(#6a80b8 0px,#6a80b8 1px,#9cbaf2 1px,#9cbaf2 3px,#8aaae8 3px,#8aaae8 5px,#7898e0 5px,#7898e0 20px,#80a2e8 20px,#80a2e8 27px,#7690d8 27px,#7690d8 30px,#7078b8 30px,#7078b8 31px);border-radius:7px 7px 0 0"></div>
<svg style="position:absolute;left:459px;top:97px" width="16" height="15" viewBox="0 0 16 15" shape-rendering="crispEdges">
<rect x="6" y="0" width="2" height="6" fill="#0a1a6a"/><rect x="8" y="1" width="1" height="5" fill="#70d0f0"/><rect x="8" y="1" width="2" height="1" fill="#208080"/>
<rect x="0" y="6" width="16" height="3" fill="#0a1060"/><rect x="1" y="7" width="14" height="1" fill="#7078c0"/>
<rect x="0" y="9" width="3" height="5" fill="#0a1060"/><rect x="13" y="9" width="3" height="5" fill="#0a1060"/>
<rect x="3" y="9" width="10" height="4" fill="#b8e0e8"/><rect x="5" y="9" width="6" height="3" fill="#e890a0"/><rect x="5" y="9" width="6" height="1" fill="#f8d0d8"/>
<rect x="0" y="13" width="16" height="1" fill="#105850"/><rect x="1" y="14" width="14" height="1" fill="#60b0b0"/>
</svg>
<div style="position:absolute;left:478px;top:96px;white-space:nowrap;font:bold 13px 'Liberation Sans', sans-serif;color:#d8e2f8;line-height:18px;-webkit-text-stroke:0.35px #d8e2f8;letter-spacing:0.2px">Vertici plinto</div>
<div style="position:absolute;left:574px;top:95px;width:19px;height:19px;border:1px solid #e0c8e0;border-radius:3px;background:linear-gradient(135deg,#d69aa8 0%,#b87180 50%,#a86070 100%);overflow:hidden"><svg style="position:absolute;left:0;top:0" width="21" height="21"><path d="M6 6 L14 14 M14 6 L6 14" stroke="#f0f0ff" stroke-width="2" stroke-linecap="square"/></svg></div>
<div style="position:absolute;left:458px;top:119px;width:139px;height:130px;background:#fff"></div>
<div style="position:absolute;left:457px;top:262px;width:390px;height:109px;background:#5a6098;border-radius:7px 7px 0 0"></div>
<div style="position:absolute;left:457px;top:293px;width:4px;height:78px;background:linear-gradient(90deg,#5a6098 0px,#5a6098 1px,#8088d0 1px,#8088d0 3px,#7078b8 3px)"></div>
<div style="position:absolute;left:843px;top:293px;width:4px;height:78px;background:linear-gradient(270deg,#5a6098 0px,#5a6098 2px,#8088d0 2px,#8088d0 3px,#7880c0 3px)"></div>
<div style="position:absolute;left:457px;top:367px;width:390px;height:4px;background:linear-gradient(0deg,#5a6098 0px,#5a6098 1px,#8088d0 1px,#8088d0 3px,#7078b8 3px)"></div>
<div style="position:absolute;left:457px;top:262px;width:390px;height:31px;background:linear-gradient(#6a80b8 0px,#6a80b8 1px,#9cbaf2 1px,#9cbaf2 3px,#8aaae8 3px,#8aaae8 5px,#7898e0 5px,#7898e0 20px,#80a2e8 20px,#80a2e8 27px,#7690d8 27px,#7690d8 30px,#7078b8 30px,#7078b8 31px);border-radius:7px 7px 0 0"></div>
<svg style="position:absolute;left:463px;top:271px" width="16" height="15" viewBox="0 0 16 15" shape-rendering="crispEdges">
<rect x="6" y="0" width="2" height="6" fill="#0a1a6a"/><rect x="8" y="1" width="1" height="5" fill="#70d0f0"/><rect x="8" y="1" width="2" height="1" fill="#208080"/>
<rect x="0" y="6" width="16" height="3" fill="#0a1060"/><rect x="1" y="7" width="14" height="1" fill="#7078c0"/>
<rect x="0" y="9" width="3" height="5" fill="#0a1060"/><rect x="13" y="9" width="3" height="5" fill="#0a1060"/>
<rect x="3" y="9" width="10" height="4" fill="#b8e0e8"/><rect x="5" y="9" width="6" height="3" fill="#e890a0"/><rect x="5" y="9" width="6" height="1" fill="#f8d0d8"/>
<rect x="0" y="13" width="16" height="1" fill="#105850"/><rect x="1" y="14" width="14" height="1" fill="#60b0b0"/>
</svg>
<div style="position:absolute;left:482px;top:270px;white-space:nowrap;font:bold 13px 'Liberation Sans', sans-serif;color:#d8e2f8;line-height:18px;-webkit-text-stroke:0.35px #d8e2f8;letter-spacing:0.2px">Pilastri</div>
<div style="position:absolute;left:821px;top:269px;width:19px;height:19px;border:1px solid #e0c8e0;border-radius:3px;background:linear-gradient(135deg,#d69aa8 0%,#b87180 50%,#a86070 100%);overflow:hidden"><svg style="position:absolute;left:0;top:0" width="21" height="21"><path d="M6 6 L14 14 M14 6 L6 14" stroke="#f0f0ff" stroke-width="2" stroke-linecap="square"/></svg></div>
<div style="position:absolute;left:462px;top:293px;width:381px;height:73px;background:#fff"></div>
<div style="position:absolute;left:16px;top:530px;width:522px;height:109px;background:#0a28b8;border-radius:7px 7px 0 0"></div>
<div style="position:absolute;left:16px;top:561px;width:4px;height:78px;background:linear-gradient(90deg,#0020b8 0px,#0020b8 1px,#1a48e0 1px,#2a58e8 3px,#3060e8 3px,#3060e8 4px)"></div>
<div style="position:absolute;left:534px;top:561px;width:4px;height:78px;background:linear-gradient(270deg,#0018a0 0px,#0018a0 1px,#0a30c0 1px,#1038c8 4px)"></div>
<div style="position:absolute;left:16px;top:635px;width:522px;height:4px;background:linear-gradient(0deg,#0018a0 0px,#0018a0 1px,#0a30c0 1px,#1038c8 4px)"></div>
<div style="position:absolute;left:16px;top:530px;width:522px;height:31px;background:linear-gradient(#2050a0 0px,#2050a0 1px,#3a8af8 1px,#3a8af8 3px,#0058e8 3px,#0056e4 19px,#0064f4 19px,#0064f4 28px,#0040c0 28px,#0040c0 30px,#a0b8e0 30px,#a0b8e0 31px);border-radius:7px 7px 0 0"></div>
<svg style="position:absolute;left:22px;top:539px" width="16" height="15" viewBox="0 0 16 15" shape-rendering="crispEdges">
<rect x="6" y="0" width="2" height="6" fill="#0a1a6a"/><rect x="8" y="1" width="1" height="5" fill="#70d0f0"/><rect x="8" y="1" width="2" height="1" fill="#208080"/>
<rect x="0" y="6" width="16" height="3" fill="#0a1060"/><rect x="1" y="7" width="14" height="1" fill="#7078c0"/>
<rect x="0" y="9" width="3" height="5" fill="#0a1060"/><rect x="13" y="9" width="3" height="5" fill="#0a1060"/>
<rect x="3" y="9" width="10" height="4" fill="#b8e0e8"/><rect x="5" y="9" width="6" height="3" fill="#e890a0"/><rect x="5" y="9" width="6" height="1" fill="#f8d0d8"/>
<rect x="0" y="13" width="16" height="1" fill="#105850"/><rect x="1" y="14" width="14" height="1" fill="#60b0b0"/>
</svg>
<div style="position:absolute;left:40px;top:538px;white-space:nowrap;font:bold 13px 'Liberation Sans', sans-serif;color:#ffffff;line-height:18px;-webkit-text-stroke:0.35px #ffffff;letter-spacing:0.2px">Pali</div>
<div style="position:absolute;left:512px;top:537px;width:19px;height:19px;border:1px solid #fff;border-radius:3px;background:linear-gradient(135deg,#f39a7c 0%,#e0593a 40%,#c94a2b 100%);overflow:hidden"><svg style="position:absolute;left:0;top:0" width="21" height="21"><path d="M6 6 L14 14 M14 6 L6 14" stroke="#fff" stroke-width="2" stroke-linecap="square"/></svg></div>
<div style="position:absolute;left:20px;top:560px;width:514px;height:75px;background:#fff"></div>
<div style="position:absolute;left:459px;top:120px;width:13px;height:14px;background:#ece9d8;border-top:1px solid #fff;border-left:1px solid #fff;box-sizing:border-box"></div>
<div style="position:absolute;left:473px;top:120px;width:32px;height:14px;background:#ece9d8;border-top:1px solid #fff;border-left:1px solid #fff;box-sizing:border-box"></div>
<div style="position:absolute;left:506px;top:120px;width:43px;height:14px;background:#ece9d8;border-top:1px solid #fff;border-left:1px solid #fff;box-sizing:border-box"></div>
<div style="position:absolute;left:550px;top:120px;width:43px;height:14px;background:#ece9d8;border-top:1px solid #fff;border-left:1px solid #fff;box-sizing:border-box"></div>
<div style="position:absolute;left:458px;top:119px;width:136px;height:1px;background:#716f64"></div>
<div style="position:absolute;left:458px;top:119px;width:1px;height:128px;background:#716f64"></div>
<div style="position:absolute;left:458px;top:134px;width:136px;height:1px;background:#716f64"></div>
<div style="position:absolute;left:472px;top:119px;width:1px;height:16px;background:#716f64"></div>
<div style="position:absolute;left:505px;top:119px;width:1px;height:16px;background:#716f64"></div>
<div style="position:absolute;left:549px;top:119px;width:1px;height:16px;background:#716f64"></div>
<div style="position:absolute;left:593px;top:119px;width:1px;height:16px;background:#716f64"></div>
<div style="position:absolute;left:459px;top:135px;width:13px;height:13px;background:#ece9d8;border-top:1px solid #fff;border-left:1px solid #fff;box-sizing:border-box"></div>
<div style="position:absolute;left:473px;top:135px;width:32px;height:13px;background:#e0ffff"></div>
<div style="position:absolute;left:506px;top:135px;width:43px;height:13px;background:#e6e6fa"></div>
<div style="position:absolute;left:550px;top:135px;width:43px;height:13px;background:#e6e6fa"></div>
<div style="position:absolute;left:459px;top:148px;width:14px;height:1px;background:#716f64"></div>
<div style="position:absolute;left:473px;top:148px;width:121px;height:1px;background:#c4c4d0"></div>
<div style="position:absolute;left:459px;top:149px;width:13px;height:13px;background:#ece9d8;border-top:1px solid #fff;border-left:1px solid #fff;box-sizing:border-box"></div>
<div style="position:absolute;left:473px;top:149px;width:32px;height:13px;background:#e0ffff"></div>
<div style="position:absolute;left:506px;top:149px;width:43px;height:13px;background:#e6e6fa"></div>
<div style="position:absolute;left:550px;top:149px;width:43px;height:13px;background:#e6e6fa"></div>
<div style="position:absolute;left:459px;top:162px;width:14px;height:1px;background:#716f64"></div>
<div style="position:absolute;left:473px;top:162px;width:121px;height:1px;background:#c4c4d0"></div>
<div style="position:absolute;left:459px;top:163px;width:13px;height:13px;background:#ece9d8;border-top:1px solid #fff;border-left:1px solid #fff;box-sizing:border-box"></div>
<div style="position:absolute;left:473px;top:163px;width:32px;height:13px;background:#e0ffff"></div>
<div style="position:absolute;left:506px;top:163px;width:43px;height:13px;background:#e6e6fa"></div>
<div style="position:absolute;left:550px;top:163px;width:43px;height:13px;background:#e6e6fa"></div>
<div style="position:absolute;left:459px;top:176px;width:14px;height:1px;background:#716f64"></div>
<div style="position:absolute;left:473px;top:176px;width:121px;height:1px;background:#c4c4d0"></div>
<div style="position:absolute;left:459px;top:177px;width:13px;height:13px;background:#ece9d8;border-top:1px solid #fff;border-left:1px solid #fff;box-sizing:border-box"></div>
<div style="position:absolute;left:473px;top:177px;width:32px;height:13px;background:#e0ffff"></div>
<div style="position:absolute;left:506px;top:177px;width:43px;height:13px;background:#e6e6fa"></div>
<div style="position:absolute;left:550px;top:177px;width:43px;height:13px;background:#e6e6fa"></div>
<div style="position:absolute;left:459px;top:190px;width:14px;height:1px;background:#716f64"></div>
<div style="position:absolute;left:473px;top:190px;width:121px;height:1px;background:#c4c4d0"></div>
<div style="position:absolute;left:459px;top:191px;width:13px;height:13px;background:#ece9d8;border-top:1px solid #fff;border-left:1px solid #fff;box-sizing:border-box"></div>
<div style="position:absolute;left:473px;top:191px;width:32px;height:13px;background:#e0ffff"></div>
<div style="position:absolute;left:506px;top:191px;width:43px;height:13px;background:#e6e6fa"></div>
<div style="position:absolute;left:550px;top:191px;width:43px;height:13px;background:#e6e6fa"></div>
<div style="position:absolute;left:459px;top:204px;width:14px;height:1px;background:#716f64"></div>
<div style="position:absolute;left:473px;top:204px;width:121px;height:1px;background:#c4c4d0"></div>
<div style="position:absolute;left:459px;top:205px;width:13px;height:13px;background:#ece9d8;border-top:1px solid #fff;border-left:1px solid #fff;box-sizing:border-box"></div>
<div style="position:absolute;left:473px;top:205px;width:32px;height:13px;background:#e0ffff"></div>
<div style="position:absolute;left:506px;top:205px;width:43px;height:13px;background:#e6e6fa"></div>
<div style="position:absolute;left:550px;top:205px;width:43px;height:13px;background:#e6e6fa"></div>
<div style="position:absolute;left:459px;top:218px;width:14px;height:1px;background:#716f64"></div>
<div style="position:absolute;left:473px;top:218px;width:121px;height:1px;background:#c4c4d0"></div>
<div style="position:absolute;left:459px;top:219px;width:13px;height:13px;background:#ece9d8;border-top:1px solid #fff;border-left:1px solid #fff;box-sizing:border-box"></div>
<div style="position:absolute;left:473px;top:219px;width:32px;height:13px;background:#e0ffff"></div>
<div style="position:absolute;left:506px;top:219px;width:43px;height:13px;background:#e6e6fa"></div>
<div style="position:absolute;left:550px;top:219px;width:43px;height:13px;background:#e6e6fa"></div>
<div style="position:absolute;left:459px;top:232px;width:14px;height:1px;background:#716f64"></div>
<div style="position:absolute;left:473px;top:232px;width:121px;height:1px;background:#c4c4d0"></div>
<div style="position:absolute;left:459px;top:233px;width:13px;height:13px;background:#ece9d8;border-top:1px solid #fff;border-left:1px solid #fff;box-sizing:border-box"></div>
<div style="position:absolute;left:473px;top:233px;width:32px;height:13px;background:#e0ffff"></div>
<div style="position:absolute;left:506px;top:233px;width:43px;height:13px;background:#e6e6fa"></div>
<div style="position:absolute;left:550px;top:233px;width:43px;height:13px;background:#e6e6fa"></div>
<div style="position:absolute;left:459px;top:246px;width:14px;height:1px;background:#716f64"></div>
<div style="position:absolute;left:473px;top:246px;width:121px;height:1px;background:#c4c4d0"></div>
<div style="position:absolute;left:472px;top:135px;width:1px;height:111px;background:#716f64"></div>
<div style="position:absolute;left:505px;top:135px;width:1px;height:111px;background:#c4c4d0"></div>
<div style="position:absolute;left:549px;top:135px;width:1px;height:111px;background:#c4c4d0"></div>
<div style="position:absolute;left:593px;top:135px;width:1px;height:111px;background:#a8a8a4"></div>
<div style="position:absolute;left:458px;top:119px;width:1px;height:128px;background:#716f64"></div>
<div style="position:absolute;left:473px;top:120px;width:32px;height:14px;font:11px 'Liberation Sans', sans-serif;color:#000;line-height:14px;text-align:center;box-sizing:border-box;">pnt</div>
<div style="position:absolute;left:506px;top:120px;width:43px;height:14px;font:11px 'Liberation Sans', sans-serif;color:#000;line-height:14px;text-align:right;box-sizing:border-box;padding-right:2px">x</div>
<div style="position:absolute;left:550px;top:120px;width:43px;height:14px;font:11px 'Liberation Sans', sans-serif;color:#000;line-height:14px;text-align:right;box-sizing:border-box;padding-right:2px">y</div>
<div style="position:absolute;left:473px;top:136px;width:32px;height:13px;font:11px 'Liberation Sans', sans-serif;color:#000;line-height:13px;text-align:center;box-sizing:border-box;;white-space:nowrap">1</div>
<div style="position:absolute;left:506px;top:136px;width:43px;height:13px;font:11px 'Liberation Sans', sans-serif;color:#000;line-height:13px;text-align:right;box-sizing:border-box;padding-right:0px;white-space:nowrap">-40,0</div>
<div style="position:absolute;left:550px;top:136px;width:43px;height:13px;font:11px 'Liberation Sans', sans-serif;color:#000;line-height:13px;text-align:right;box-sizing:border-box;padding-right:0px;white-space:nowrap">-40,0</div>
<div style="position:absolute;left:473px;top:150px;width:32px;height:13px;font:11px 'Liberation Sans', sans-serif;color:#000;line-height:13px;text-align:center;box-sizing:border-box;;white-space:nowrap">2</div>
<div style="position:absolute;left:506px;top:150px;width:43px;height:13px;font:11px 'Liberation Sans', sans-serif;color:#000;line-height:13px;text-align:right;box-sizing:border-box;padding-right:0px;white-space:nowrap">540,0</div>
<div style="position:absolute;left:550px;top:150px;width:43px;height:13px;font:11px 'Liberation Sans', sans-serif;color:#000;line-height:13px;text-align:right;box-sizing:border-box;padding-right:0px;white-space:nowrap">-40,0</div>
<div style="position:absolute;left:473px;top:164px;width:32px;height:13px;font:11px 'Liberation Sans', sans-serif;color:#000;line-height:13px;text-align:center;box-sizing:border-box;;white-space:nowrap">3</div>
<div style="position:absolute;left:506px;top:164px;width:43px;height:13px;font:11px 'Liberation Sans', sans-serif;color:#000;line-height:13px;text-align:right;box-sizing:border-box;padding-right:0px;white-space:nowrap">540,0</div>
<div style="position:absolute;left:550px;top:164px;width:43px;height:13px;font:11px 'Liberation Sans', sans-serif;color:#000;line-height:13px;text-align:right;box-sizing:border-box;padding-right:0px;white-space:nowrap">440,0</div>
<div style="position:absolute;left:473px;top:178px;width:32px;height:13px;font:11px 'Liberation Sans', sans-serif;color:#000;line-height:13px;text-align:center;box-sizing:border-box;;white-space:nowrap">4</div>
<div style="position:absolute;left:506px;top:178px;width:43px;height:13px;font:11px 'Liberation Sans', sans-serif;color:#000;line-height:13px;text-align:right;box-sizing:border-box;padding-right:0px;white-space:nowrap">360,0</div>
<div style="position:absolute;left:550px;top:178px;width:43px;height:13px;font:11px 'Liberation Sans', sans-serif;color:#000;line-height:13px;text-align:right;box-sizing:border-box;padding-right:0px;white-space:nowrap">440,0</div>
<div style="position:absolute;left:473px;top:192px;width:32px;height:13px;font:11px 'Liberation Sans', sans-serif;color:#000;line-height:13px;text-align:center;box-sizing:border-box;;white-space:nowrap">5</div>
<div style="position:absolute;left:506px;top:192px;width:43px;height:13px;font:11px 'Liberation Sans', sans-serif;color:#000;line-height:13px;text-align:right;box-sizing:border-box;padding-right:0px;white-space:nowrap">360,0</div>
<div style="position:absolute;left:550px;top:192px;width:43px;height:13px;font:11px 'Liberation Sans', sans-serif;color:#000;line-height:13px;text-align:right;box-sizing:border-box;padding-right:0px;white-space:nowrap">220,0</div>
<div style="position:absolute;left:473px;top:206px;width:32px;height:13px;font:11px 'Liberation Sans', sans-serif;color:#000;line-height:13px;text-align:center;box-sizing:border-box;;white-space:nowrap">6</div>
<div style="position:absolute;left:506px;top:206px;width:43px;height:13px;font:11px 'Liberation Sans', sans-serif;color:#000;line-height:13px;text-align:right;box-sizing:border-box;padding-right:0px;white-space:nowrap">140,0</div>
<div style="position:absolute;left:550px;top:206px;width:43px;height:13px;font:11px 'Liberation Sans', sans-serif;color:#000;line-height:13px;text-align:right;box-sizing:border-box;padding-right:0px;white-space:nowrap">220,0</div>
<div style="position:absolute;left:473px;top:220px;width:32px;height:13px;font:11px 'Liberation Sans', sans-serif;color:#000;line-height:13px;text-align:center;box-sizing:border-box;;white-space:nowrap">7</div>
<div style="position:absolute;left:506px;top:220px;width:43px;height:13px;font:11px 'Liberation Sans', sans-serif;color:#000;line-height:13px;text-align:right;box-sizing:border-box;padding-right:0px;white-space:nowrap">140,0</div>
<div style="position:absolute;left:550px;top:220px;width:43px;height:13px;font:11px 'Liberation Sans', sans-serif;color:#000;line-height:13px;text-align:right;box-sizing:border-box;padding-right:0px;white-space:nowrap">440,0</div>
<div style="position:absolute;left:473px;top:234px;width:32px;height:13px;font:11px 'Liberation Sans', sans-serif;color:#000;line-height:13px;text-align:center;box-sizing:border-box;;white-space:nowrap">8</div>
<div style="position:absolute;left:506px;top:234px;width:43px;height:13px;font:11px 'Liberation Sans', sans-serif;color:#000;line-height:13px;text-align:right;box-sizing:border-box;padding-right:0px;white-space:nowrap">-40,0</div>
<div style="position:absolute;left:550px;top:234px;width:43px;height:13px;font:11px 'Liberation Sans', sans-serif;color:#000;line-height:13px;text-align:right;box-sizing:border-box;padding-right:0px;white-space:nowrap">440,0</div>
<div style="position:absolute;left:463px;top:234px;width:0;height:0;border-top:5.5px solid transparent;border-bottom:5.5px solid transparent;border-left:6.5px solid #000"></div>
<div style="position:absolute;left:463px;top:294px;width:13px;height:14px;background:#ece9d8;border-top:1px solid #fff;border-left:1px solid #fff;box-sizing:border-box"></div>
<div style="position:absolute;left:477px;top:294px;width:32px;height:14px;background:#ece9d8;border-top:1px solid #fff;border-left:1px solid #fff;box-sizing:border-box"></div>
<div style="position:absolute;left:510px;top:294px;width:43px;height:14px;background:#ece9d8;border-top:1px solid #fff;border-left:1px solid #fff;box-sizing:border-box"></div>
<div style="position:absolute;left:554px;top:294px;width:43px;height:14px;background:#ece9d8;border-top:1px solid #fff;border-left:1px solid #fff;box-sizing:border-box"></div>
<div style="position:absolute;left:598px;top:294px;width:43px;height:14px;background:#ece9d8;border-top:1px solid #fff;border-left:1px solid #fff;box-sizing:border-box"></div>
<div style="position:absolute;left:642px;top:294px;width:32px;height:14px;background:#ece9d8;border-top:1px solid #fff;border-left:1px solid #fff;box-sizing:border-box"></div>
<div style="position:absolute;left:675px;top:294px;width:32px;height:14px;background:#ece9d8;border-top:1px solid #fff;border-left:1px solid #fff;box-sizing:border-box"></div>
<div style="position:absolute;left:708px;top:294px;width:43px;height:14px;background:#ece9d8;border-top:1px solid #fff;border-left:1px solid #fff;box-sizing:border-box"></div>
<div style="position:absolute;left:752px;top:294px;width:43px;height:14px;background:#ece9d8;border-top:1px solid #fff;border-left:1px solid #fff;box-sizing:border-box"></div>
<div style="position:absolute;left:796px;top:294px;width:43px;height:14px;background:#ece9d8;border-top:1px solid #fff;border-left:1px solid #fff;box-sizing:border-box"></div>
<div style="position:absolute;left:462px;top:293px;width:378px;height:1px;background:#716f64"></div>
<div style="position:absolute;left:462px;top:293px;width:1px;height:72px;background:#716f64"></div>
<div style="position:absolute;left:462px;top:308px;width:378px;height:1px;background:#716f64"></div>
<div style="position:absolute;left:476px;top:293px;width:1px;height:16px;background:#716f64"></div>
<div style="position:absolute;left:509px;top:293px;width:1px;height:16px;background:#716f64"></div>
<div style="position:absolute;left:553px;top:293px;width:1px;height:16px;background:#716f64"></div>
<div style="position:absolute;left:597px;top:293px;width:1px;height:16px;background:#716f64"></div>
<div style="position:absolute;left:641px;top:293px;width:1px;height:16px;background:#716f64"></div>
<div style="position:absolute;left:674px;top:293px;width:1px;height:16px;background:#716f64"></div>
<div style="position:absolute;left:707px;top:293px;width:1px;height:16px;background:#716f64"></div>
<div style="position:absolute;left:751px;top:293px;width:1px;height:16px;background:#716f64"></div>
<div style="position:absolute;left:795px;top:293px;width:1px;height:16px;background:#716f64"></div>
<div style="position:absolute;left:839px;top:293px;width:1px;height:16px;background:#716f64"></div>
<div style="position:absolute;left:463px;top:309px;width:13px;height:13px;background:#ece9d8;border-top:1px solid #fff;border-left:1px solid #fff;box-sizing:border-box"></div>
<div style="position:absolute;left:477px;top:309px;width:32px;height:13px;background:#e0ffff"></div>
<div style="position:absolute;left:510px;top:309px;width:43px;height:13px;background:#e6e6fa"></div>
<div style="position:absolute;left:554px;top:309px;width:43px;height:13px;background:#e6e6fa"></div>
<div style="position:absolute;left:598px;top:309px;width:43px;height:13px;background:#e6e6fa"></div>
<div style="position:absolute;left:642px;top:309px;width:32px;height:13px;background:#e6e6fa"></div>
<div style="position:absolute;left:675px;top:309px;width:32px;height:13px;background:#e6e6fa"></div>
<div style="position:absolute;left:708px;top:309px;width:43px;height:13px;background:#f8f8f4"></div>
<div style="position:absolute;left:752px;top:309px;width:43px;height:13px;background:#e0ffff"></div>
<div style="position:absolute;left:796px;top:309px;width:43px;height:13px;background:#f0ffff"></div>
<div style="position:absolute;left:463px;top:322px;width:14px;height:1px;background:#716f64"></div>
<div style="position:absolute;left:477px;top:322px;width:363px;height:1px;background:#c4c4d0"></div>
<div style="position:absolute;left:463px;top:323px;width:13px;height:13px;background:#ece9d8;border-top:1px solid #fff;border-left:1px solid #fff;box-sizing:border-box"></div>
<div style="position:absolute;left:477px;top:323px;width:32px;height:13px;background:#e0ffff"></div>
<div style="position:absolute;left:510px;top:323px;width:43px;height:13px;background:#e6e6fa"></div>
<div style="position:absolute;left:554px;top:323px;width:43px;height:13px;background:#e6e6fa"></div>
<div style="position:absolute;left:598px;top:323px;width:43px;height:13px;background:#e6e6fa"></div>
<div style="position:absolute;left:642px;top:323px;width:32px;height:13px;background:#e6e6fa"></div>
<div style="position:absolute;left:675px;top:323px;width:32px;height:13px;background:#e6e6fa"></div>
<div style="position:absolute;left:708px;top:323px;width:43px;height:13px;background:#f8f8f4"></div>
<div style="position:absolute;left:752px;top:323px;width:43px;height:13px;background:#e0ffff"></div>
<div style="position:absolute;left:796px;top:323px;width:43px;height:13px;background:#f0ffff"></div>
<div style="position:absolute;left:463px;top:336px;width:14px;height:1px;background:#716f64"></div>
<div style="position:absolute;left:477px;top:336px;width:363px;height:1px;background:#c4c4d0"></div>
<div style="position:absolute;left:463px;top:337px;width:13px;height:13px;background:#ece9d8;border-top:1px solid #fff;border-left:1px solid #fff;box-sizing:border-box"></div>
<div style="position:absolute;left:477px;top:337px;width:32px;height:13px;background:#e0ffff"></div>
<div style="position:absolute;left:510px;top:337px;width:43px;height:13px;background:#e6e6fa"></div>
<div style="position:absolute;left:554px;top:337px;width:43px;height:13px;background:#e6e6fa"></div>
<div style="position:absolute;left:598px;top:337px;width:43px;height:13px;background:#e6e6fa"></div>
<div style="position:absolute;left:642px;top:337px;width:32px;height:13px;background:#e6e6fa"></div>
<div style="position:absolute;left:675px;top:337px;width:32px;height:13px;background:#e6e6fa"></div>
<div style="position:absolute;left:708px;top:337px;width:43px;height:13px;background:#f8f8f4"></div>
<div style="position:absolute;left:752px;top:337px;width:43px;height:13px;background:#e0ffff"></div>
<div style="position:absolute;left:796px;top:337px;width:43px;height:13px;background:#f0ffff"></div>
<div style="position:absolute;left:463px;top:350px;width:14px;height:1px;background:#716f64"></div>
<div style="position:absolute;left:477px;top:350px;width:363px;height:1px;background:#c4c4d0"></div>
<div style="position:absolute;left:463px;top:351px;width:13px;height:13px;background:#ece9d8;border-top:1px solid #fff;border-left:1px solid #fff;box-sizing:border-box"></div>
<div style="position:absolute;left:477px;top:351px;width:32px;height:13px;background:#e0ffff"></div>
<div style="position:absolute;left:510px;top:351px;width:43px;height:13px;background:#e6e6fa"></div>
<div style="position:absolute;left:554px;top:351px;width:43px;height:13px;background:#e6e6fa"></div>
<div style="position:absolute;left:598px;top:351px;width:43px;height:13px;background:#e6e6fa"></div>
<div style="position:absolute;left:642px;top:351px;width:32px;height:13px;background:#e6e6fa"></div>
<div style="position:absolute;left:675px;top:351px;width:32px;height:13px;background:#e6e6fa"></div>
<div style="position:absolute;left:708px;top:351px;width:43px;height:13px;background:#f8f8f4"></div>
<div style="position:absolute;left:752px;top:351px;width:43px;height:13px;background:#e0ffff"></div>
<div style="position:absolute;left:796px;top:351px;width:43px;height:13px;background:#f0ffff"></div>
<div style="position:absolute;left:463px;top:364px;width:14px;height:1px;background:#716f64"></div>
<div style="position:absolute;left:477px;top:364px;width:363px;height:1px;background:#c4c4d0"></div>
<div style="position:absolute;left:476px;top:309px;width:1px;height:55px;background:#716f64"></div>
<div style="position:absolute;left:509px;top:309px;width:1px;height:55px;background:#c4c4d0"></div>
<div style="position:absolute;left:553px;top:309px;width:1px;height:55px;background:#c4c4d0"></div>
<div style="position:absolute;left:597px;top:309px;width:1px;height:55px;background:#c4c4d0"></div>
<div style="position:absolute;left:641px;top:309px;width:1px;height:55px;background:#c4c4d0"></div>
<div style="position:absolute;left:674px;top:309px;width:1px;height:55px;background:#c4c4d0"></div>
<div style="position:absolute;left:707px;top:309px;width:1px;height:55px;background:#c4c4d0"></div>
<div style="position:absolute;left:751px;top:309px;width:1px;height:55px;background:#c4c4d0"></div>
<div style="position:absolute;left:795px;top:309px;width:1px;height:55px;background:#c4c4d0"></div>
<div style="position:absolute;left:839px;top:309px;width:1px;height:55px;background:#a8a8a4"></div>
<div style="position:absolute;left:462px;top:293px;width:1px;height:72px;background:#716f64"></div>
<div style="position:absolute;left:477px;top:294px;width:32px;height:14px;font:11px 'Liberation Sans', sans-serif;color:#000;line-height:14px;text-align:center;box-sizing:border-box;">pil</div>
<div style="position:absolute;left:510px;top:294px;width:43px;height:14px;font:11px 'Liberation Sans', sans-serif;color:#000;line-height:14px;text-align:right;box-sizing:border-box;padding-right:2px">x</div>
<div style="position:absolute;left:554px;top:294px;width:43px;height:14px;font:11px 'Liberation Sans', sans-serif;color:#000;line-height:14px;text-align:right;box-sizing:border-box;padding-right:2px">y</div>
<div style="position:absolute;left:598px;top:294px;width:43px;height:14px;font:11px 'Liberation Sans', sans-serif;color:#000;line-height:14px;text-align:right;box-sizing:border-box;padding-right:2px">b</div>
<div style="position:absolute;left:642px;top:294px;width:32px;height:14px;font:11px 'Liberation Sans', sans-serif;color:#000;line-height:14px;text-align:right;box-sizing:border-box;padding-right:2px">h</div>
<div style="position:absolute;left:675px;top:294px;width:32px;height:14px;font:11px 'Liberation Sans', sans-serif;color:#000;line-height:14px;text-align:right;box-sizing:border-box;padding-right:2px">l</div>
<div style="position:absolute;left:708px;top:294px;width:43px;height:14px;font:11px 'Liberation Sans', sans-serif;color:#000;line-height:14px;text-align:right;box-sizing:border-box;padding-right:2px">r</div>
<div style="position:absolute;left:752px;top:294px;width:43px;height:14px;font:11px 'Liberation Sans', sans-serif;color:#000;line-height:14px;text-align:center;box-sizing:border-box;">jed</div>
<div style="position:absolute;left:796px;top:294px;width:43px;height:14px;font:11px 'Liberation Sans', sans-serif;color:#000;line-height:14px;text-align:left;box-sizing:border-box;padding-left:3px">pqp</div>
<div style="position:absolute;left:477px;top:310px;width:32px;height:13px;font:11px 'Liberation Sans', sans-serif;color:#000;line-height:13px;text-align:center;box-sizing:border-box;;white-space:nowrap">1</div>
<div style="position:absolute;left:510px;top:310px;width:43px;height:13px;font:11px 'Liberation Sans', sans-serif;color:#000;line-height:13px;text-align:right;box-sizing:border-box;padding-right:0px;white-space:nowrap">50,0</div>
<div style="position:absolute;left:554px;top:310px;width:43px;height:13px;font:11px 'Liberation Sans', sans-serif;color:#000;line-height:13px;text-align:right;box-sizing:border-box;padding-right:0px;white-space:nowrap">20,0</div>
<div style="position:absolute;left:598px;top:310px;width:43px;height:13px;font:11px 'Liberation Sans', sans-serif;color:#000;line-height:13px;text-align:right;box-sizing:border-box;padding-right:0px;white-space:nowrap">40</div>
<div style="position:absolute;left:642px;top:310px;width:32px;height:13px;font:11px 'Liberation Sans', sans-serif;color:#000;line-height:13px;text-align:right;box-sizing:border-box;padding-right:0px;white-space:nowrap">80</div>
<div style="position:absolute;left:675px;top:310px;width:32px;height:13px;font:11px 'Liberation Sans', sans-serif;color:#000;line-height:13px;text-align:right;box-sizing:border-box;padding-right:0px;white-space:nowrap">100</div>
<div style="position:absolute;left:708px;top:310px;width:43px;height:13px;font:11px 'Liberation Sans', sans-serif;color:#000;line-height:13px;text-align:right;box-sizing:border-box;padding-right:0px;white-space:nowrap">0,0</div>
<div style="position:absolute;left:752px;top:310px;width:43px;height:13px;font:11px 'Liberation Sans', sans-serif;color:#000;line-height:13px;text-align:center;box-sizing:border-box;;white-space:nowrap">0</div>
<div style="position:absolute;left:825px;top:309px;width:14px;height:13px;background:linear-gradient(90deg,rgba(236,233,216,0) 0%,#ece9d8 40%)"><div style="position:absolute;left:4px;top:7px;width:0;height:0;border-left:3px solid transparent;border-right:3px solid transparent;border-top:3px solid #000"></div></div>
<div style="position:absolute;left:796px;top:310px;width:29px;height:13px;font:11px 'Liberation Sans', sans-serif;color:#000;line-height:13px;text-align:left;box-sizing:border-box;padding-left:3px;white-space:nowrap">2H</div>
<div style="position:absolute;left:477px;top:324px;width:32px;height:13px;font:11px 'Liberation Sans', sans-serif;color:#000;line-height:13px;text-align:center;box-sizing:border-box;;white-space:nowrap">2</div>
<div style="position:absolute;left:510px;top:324px;width:43px;height:13px;font:11px 'Liberation Sans', sans-serif;color:#000;line-height:13px;text-align:right;box-sizing:border-box;padding-right:0px;white-space:nowrap">450,0</div>
<div style="position:absolute;left:554px;top:324px;width:43px;height:13px;font:11px 'Liberation Sans', sans-serif;color:#000;line-height:13px;text-align:right;box-sizing:border-box;padding-right:0px;white-space:nowrap">20,0</div>
<div style="position:absolute;left:598px;top:324px;width:43px;height:13px;font:11px 'Liberation Sans', sans-serif;color:#000;line-height:13px;text-align:right;box-sizing:border-box;padding-right:0px;white-space:nowrap">40</div>
<div style="position:absolute;left:642px;top:324px;width:32px;height:13px;font:11px 'Liberation Sans', sans-serif;color:#000;line-height:13px;text-align:right;box-sizing:border-box;padding-right:0px;white-space:nowrap">80</div>
<div style="position:absolute;left:675px;top:324px;width:32px;height:13px;font:11px 'Liberation Sans', sans-serif;color:#000;line-height:13px;text-align:right;box-sizing:border-box;padding-right:0px;white-space:nowrap">100</div>
<div style="position:absolute;left:708px;top:324px;width:43px;height:13px;font:11px 'Liberation Sans', sans-serif;color:#000;line-height:13px;text-align:right;box-sizing:border-box;padding-right:0px;white-space:nowrap">0,0</div>
<div style="position:absolute;left:752px;top:324px;width:43px;height:13px;font:11px 'Liberation Sans', sans-serif;color:#000;line-height:13px;text-align:center;box-sizing:border-box;;white-space:nowrap">0</div>
<div style="position:absolute;left:825px;top:323px;width:14px;height:13px;background:linear-gradient(90deg,rgba(236,233,216,0) 0%,#ece9d8 40%)"><div style="position:absolute;left:4px;top:7px;width:0;height:0;border-left:3px solid transparent;border-right:3px solid transparent;border-top:3px solid #000"></div></div>
<div style="position:absolute;left:796px;top:324px;width:29px;height:13px;font:11px 'Liberation Sans', sans-serif;color:#000;line-height:13px;text-align:left;box-sizing:border-box;padding-left:3px;white-space:nowrap">2H</div>
<div style="position:absolute;left:477px;top:338px;width:32px;height:13px;font:11px 'Liberation Sans', sans-serif;color:#000;line-height:13px;text-align:center;box-sizing:border-box;;white-space:nowrap">3</div>
<div style="position:absolute;left:510px;top:338px;width:43px;height:13px;font:11px 'Liberation Sans', sans-serif;color:#000;line-height:13px;text-align:right;box-sizing:border-box;padding-right:0px;white-space:nowrap">50,0</div>
<div style="position:absolute;left:554px;top:338px;width:43px;height:13px;font:11px 'Liberation Sans', sans-serif;color:#000;line-height:13px;text-align:right;box-sizing:border-box;padding-right:0px;white-space:nowrap">380,0</div>
<div style="position:absolute;left:598px;top:338px;width:43px;height:13px;font:11px 'Liberation Sans', sans-serif;color:#000;line-height:13px;text-align:right;box-sizing:border-box;padding-right:0px;white-space:nowrap">40</div>
<div style="position:absolute;left:642px;top:338px;width:32px;height:13px;font:11px 'Liberation Sans', sans-serif;color:#000;line-height:13px;text-align:right;box-sizing:border-box;padding-right:0px;white-space:nowrap">80</div>
<div style="position:absolute;left:675px;top:338px;width:32px;height:13px;font:11px 'Liberation Sans', sans-serif;color:#000;line-height:13px;text-align:right;box-sizing:border-box;padding-right:0px;white-space:nowrap">100</div>
<div style="position:absolute;left:708px;top:338px;width:43px;height:13px;font:11px 'Liberation Sans', sans-serif;color:#000;line-height:13px;text-align:right;box-sizing:border-box;padding-right:0px;white-space:nowrap">0,0</div>
<div style="position:absolute;left:752px;top:338px;width:43px;height:13px;font:11px 'Liberation Sans', sans-serif;color:#000;line-height:13px;text-align:center;box-sizing:border-box;;white-space:nowrap">0</div>
<div style="position:absolute;left:825px;top:337px;width:14px;height:13px;background:linear-gradient(90deg,rgba(236,233,216,0) 0%,#ece9d8 40%)"><div style="position:absolute;left:4px;top:7px;width:0;height:0;border-left:3px solid transparent;border-right:3px solid transparent;border-top:3px solid #000"></div></div>
<div style="position:absolute;left:796px;top:338px;width:29px;height:13px;font:11px 'Liberation Sans', sans-serif;color:#000;line-height:13px;text-align:left;box-sizing:border-box;padding-left:3px;white-space:nowrap">2H</div>
<div style="position:absolute;left:477px;top:352px;width:32px;height:13px;font:11px 'Liberation Sans', sans-serif;color:#000;line-height:13px;text-align:center;box-sizing:border-box;;white-space:nowrap">4</div>
<div style="position:absolute;left:510px;top:352px;width:43px;height:13px;font:11px 'Liberation Sans', sans-serif;color:#000;line-height:13px;text-align:right;box-sizing:border-box;padding-right:0px;white-space:nowrap">450,0</div>
<div style="position:absolute;left:554px;top:352px;width:43px;height:13px;font:11px 'Liberation Sans', sans-serif;color:#000;line-height:13px;text-align:right;box-sizing:border-box;padding-right:0px;white-space:nowrap">380,0</div>
<div style="position:absolute;left:598px;top:352px;width:43px;height:13px;font:11px 'Liberation Sans', sans-serif;color:#000;line-height:13px;text-align:right;box-sizing:border-box;padding-right:0px;white-space:nowrap">40</div>
<div style="position:absolute;left:642px;top:352px;width:32px;height:13px;font:11px 'Liberation Sans', sans-serif;color:#000;line-height:13px;text-align:right;box-sizing:border-box;padding-right:0px;white-space:nowrap">80</div>
<div style="position:absolute;left:675px;top:352px;width:32px;height:13px;font:11px 'Liberation Sans', sans-serif;color:#000;line-height:13px;text-align:right;box-sizing:border-box;padding-right:0px;white-space:nowrap">100</div>
<div style="position:absolute;left:708px;top:352px;width:43px;height:13px;font:11px 'Liberation Sans', sans-serif;color:#000;line-height:13px;text-align:right;box-sizing:border-box;padding-right:0px;white-space:nowrap">0,0</div>
<div style="position:absolute;left:752px;top:352px;width:43px;height:13px;font:11px 'Liberation Sans', sans-serif;color:#000;line-height:13px;text-align:center;box-sizing:border-box;;white-space:nowrap">0</div>
<div style="position:absolute;left:825px;top:351px;width:14px;height:13px;background:linear-gradient(90deg,rgba(236,233,216,0) 0%,#ece9d8 40%)"><div style="position:absolute;left:4px;top:7px;width:0;height:0;border-left:3px solid transparent;border-right:3px solid transparent;border-top:3px solid #000"></div></div>
<div style="position:absolute;left:796px;top:352px;width:29px;height:13px;font:11px 'Liberation Sans', sans-serif;color:#000;line-height:13px;text-align:left;box-sizing:border-box;padding-left:3px;white-space:nowrap">2H</div>
<div style="position:absolute;left:467px;top:352px;width:0;height:0;border-top:5.5px solid transparent;border-bottom:5.5px solid transparent;border-left:6.5px solid #000"></div>
<div style="position:absolute;left:22px;top:562px;width:13px;height:14px;background:#ece9d8;border-top:1px solid #fff;border-left:1px solid #fff;box-sizing:border-box"></div>
<div style="position:absolute;left:36px;top:562px;width:32px;height:14px;background:#ece9d8;border-top:1px solid #fff;border-left:1px solid #fff;box-sizing:border-box"></div>
<div style="position:absolute;left:69px;top:562px;width:43px;height:14px;background:#ece9d8;border-top:1px solid #fff;border-left:1px solid #fff;box-sizing:border-box"></div>
<div style="position:absolute;left:113px;top:562px;width:43px;height:14px;background:#ece9d8;border-top:1px solid #fff;border-left:1px solid #fff;box-sizing:border-box"></div>
<div style="position:absolute;left:157px;top:562px;width:43px;height:14px;background:#ece9d8;border-top:1px solid #fff;border-left:1px solid #fff;box-sizing:border-box"></div>
<div style="position:absolute;left:201px;top:562px;width:43px;height:14px;background:#ece9d8;border-top:1px solid #fff;border-left:1px solid #fff;box-sizing:border-box"></div>
<div style="position:absolute;left:245px;top:562px;width:65px;height:14px;background:#ece9d8;border-top:1px solid #fff;border-left:1px solid #fff;box-sizing:border-box"></div>
<div style="position:absolute;left:311px;top:562px;width:65px;height:14px;background:#ece9d8;border-top:1px solid #fff;border-left:1px solid #fff;box-sizing:border-box"></div>
<div style="position:absolute;left:377px;top:562px;width:21px;height:14px;background:#ece9d8;border-top:1px solid #fff;border-left:1px solid #fff;box-sizing:border-box"></div>
<div style="position:absolute;left:399px;top:562px;width:43px;height:14px;background:#ece9d8;border-top:1px solid #fff;border-left:1px solid #fff;box-sizing:border-box"></div>
<div style="position:absolute;left:443px;top:562px;width:43px;height:14px;background:#ece9d8;border-top:1px solid #fff;border-left:1px solid #fff;box-sizing:border-box"></div>
<div style="position:absolute;left:487px;top:562px;width:43px;height:14px;background:#ece9d8;border-top:1px solid #fff;border-left:1px solid #fff;box-sizing:border-box"></div>
<div style="position:absolute;left:21px;top:561px;width:510px;height:1px;background:#716f64"></div>
<div style="position:absolute;left:21px;top:561px;width:1px;height:72px;background:#716f64"></div>
<div style="position:absolute;left:21px;top:576px;width:510px;height:1px;background:#716f64"></div>
<div style="position:absolute;left:35px;top:561px;width:1px;height:16px;background:#716f64"></div>
<div style="position:absolute;left:68px;top:561px;width:1px;height:16px;background:#716f64"></div>
<div style="position:absolute;left:112px;top:561px;width:1px;height:16px;background:#716f64"></div>
<div style="position:absolute;left:156px;top:561px;width:1px;height:16px;background:#716f64"></div>
<div style="position:absolute;left:200px;top:561px;width:1px;height:16px;background:#716f64"></div>
<div style="position:absolute;left:244px;top:561px;width:1px;height:16px;background:#716f64"></div>
<div style="position:absolute;left:310px;top:561px;width:1px;height:16px;background:#716f64"></div>
<div style="position:absolute;left:376px;top:561px;width:1px;height:16px;background:#716f64"></div>
<div style="position:absolute;left:398px;top:561px;width:1px;height:16px;background:#716f64"></div>
<div style="position:absolute;left:442px;top:561px;width:1px;height:16px;background:#716f64"></div>
<div style="position:absolute;left:486px;top:561px;width:1px;height:16px;background:#716f64"></div>
<div style="position:absolute;left:530px;top:561px;width:1px;height:16px;background:#716f64"></div>
<div style="position:absolute;left:22px;top:577px;width:13px;height:13px;background:#ece9d8;border-top:1px solid #fff;border-left:1px solid #fff;box-sizing:border-box"></div>
<div style="position:absolute;left:36px;top:577px;width:32px;height:13px;background:#e0ffff"></div>
<div style="position:absolute;left:69px;top:577px;width:43px;height:13px;background:#e6e6fa"></div>
<div style="position:absolute;left:113px;top:577px;width:43px;height:13px;background:#e6e6fa"></div>
<div style="position:absolute;left:157px;top:577px;width:43px;height:13px;background:#e6e6fa"></div>
<div style="position:absolute;left:201px;top:577px;width:43px;height:13px;background:#e6e6fa"></div>
<div style="position:absolute;left:245px;top:577px;width:65px;height:13px;background:#f0ffff"></div>
<div style="position:absolute;left:311px;top:577px;width:65px;height:13px;background:#f0ffff"></div>
<div style="position:absolute;left:377px;top:577px;width:21px;height:13px;background:#f8f8f4"></div>
<div style="position:absolute;left:399px;top:577px;width:43px;height:13px;background:#f0fff0"></div>
<div style="position:absolute;left:443px;top:577px;width:43px;height:13px;background:#f0fff0"></div>
<div style="position:absolute;left:487px;top:577px;width:43px;height:13px;background:#f0ffff"></div>
<div style="position:absolute;left:22px;top:590px;width:14px;height:1px;background:#716f64"></div>
<div style="position:absolute;left:36px;top:590px;width:495px;height:1px;background:#c4c4d0"></div>
<div style="position:absolute;left:22px;top:591px;width:13px;height:13px;background:#ece9d8;border-top:1px solid #fff;border-left:1px solid #fff;box-sizing:border-box"></div>
<div style="position:absolute;left:36px;top:591px;width:32px;height:13px;background:#e0ffff"></div>
<div style="position:absolute;left:69px;top:591px;width:43px;height:13px;background:#e6e6fa"></div>
<div style="position:absolute;left:113px;top:591px;width:43px;height:13px;background:#e6e6fa"></div>
<div style="position:absolute;left:157px;top:591px;width:43px;height:13px;background:#e6e6fa"></div>
<div style="position:absolute;left:201px;top:591px;width:43px;height:13px;background:#e6e6fa"></div>
<div style="position:absolute;left:245px;top:591px;width:65px;height:13px;background:#f0ffff"></div>
<div style="position:absolute;left:311px;top:591px;width:65px;height:13px;background:#f0ffff"></div>
<div style="position:absolute;left:377px;top:591px;width:21px;height:13px;background:#f8f8f4"></div>
<div style="position:absolute;left:399px;top:591px;width:43px;height:13px;background:#f0fff0"></div>
<div style="position:absolute;left:443px;top:591px;width:43px;height:13px;background:#f0fff0"></div>
<div style="position:absolute;left:487px;top:591px;width:43px;height:13px;background:#f0ffff"></div>
<div style="position:absolute;left:22px;top:604px;width:14px;height:1px;background:#716f64"></div>
<div style="position:absolute;left:36px;top:604px;width:495px;height:1px;background:#c4c4d0"></div>
<div style="position:absolute;left:22px;top:605px;width:13px;height:13px;background:#ece9d8;border-top:1px solid #fff;border-left:1px solid #fff;box-sizing:border-box"></div>
<div style="position:absolute;left:36px;top:605px;width:32px;height:13px;background:#e0ffff"></div>
<div style="position:absolute;left:69px;top:605px;width:43px;height:13px;background:#e6e6fa"></div>
<div style="position:absolute;left:113px;top:605px;width:43px;height:13px;background:#e6e6fa"></div>
<div style="position:absolute;left:157px;top:605px;width:43px;height:13px;background:#e6e6fa"></div>
<div style="position:absolute;left:201px;top:605px;width:43px;height:13px;background:#e6e6fa"></div>
<div style="position:absolute;left:245px;top:605px;width:65px;height:13px;background:#f0ffff"></div>
<div style="position:absolute;left:311px;top:605px;width:65px;height:13px;background:#f0ffff"></div>
<div style="position:absolute;left:377px;top:605px;width:21px;height:13px;background:#f8f8f4"></div>
<div style="position:absolute;left:399px;top:605px;width:43px;height:13px;background:#f0fff0"></div>
<div style="position:absolute;left:443px;top:605px;width:43px;height:13px;background:#f0fff0"></div>
<div style="position:absolute;left:487px;top:605px;width:43px;height:13px;background:#f0ffff"></div>
<div style="position:absolute;left:22px;top:618px;width:14px;height:1px;background:#716f64"></div>
<div style="position:absolute;left:36px;top:618px;width:495px;height:1px;background:#c4c4d0"></div>
<div style="position:absolute;left:22px;top:619px;width:13px;height:13px;background:#ece9d8;border-top:1px solid #fff;border-left:1px solid #fff;box-sizing:border-box"></div>
<div style="position:absolute;left:36px;top:619px;width:32px;height:13px;background:#e0ffff"></div>
<div style="position:absolute;left:69px;top:619px;width:43px;height:13px;background:#e6e6fa"></div>
<div style="position:absolute;left:113px;top:619px;width:43px;height:13px;background:#e6e6fa"></div>
<div style="position:absolute;left:157px;top:619px;width:43px;height:13px;background:#e6e6fa"></div>
<div style="position:absolute;left:201px;top:619px;width:43px;height:13px;background:#e6e6fa"></div>
<div style="position:absolute;left:245px;top:619px;width:65px;height:13px;background:#f0ffff"></div>
<div style="position:absolute;left:311px;top:619px;width:65px;height:13px;background:#f0ffff"></div>
<div style="position:absolute;left:377px;top:619px;width:21px;height:13px;background:#f8f8f4"></div>
<div style="position:absolute;left:399px;top:619px;width:43px;height:13px;background:#f0fff0"></div>
<div style="position:absolute;left:443px;top:619px;width:43px;height:13px;background:#f0fff0"></div>
<div style="position:absolute;left:487px;top:619px;width:43px;height:13px;background:#f0ffff"></div>
<div style="position:absolute;left:22px;top:632px;width:14px;height:1px;background:#716f64"></div>
<div style="position:absolute;left:36px;top:632px;width:495px;height:1px;background:#c4c4d0"></div>
<div style="position:absolute;left:35px;top:577px;width:1px;height:55px;background:#716f64"></div>
<div style="position:absolute;left:68px;top:577px;width:1px;height:55px;background:#c4c4d0"></div>
<div style="position:absolute;left:112px;top:577px;width:1px;height:55px;background:#c4c4d0"></div>
<div style="position:absolute;left:156px;top:577px;width:1px;height:55px;background:#c4c4d0"></div>
<div style="position:absolute;left:200px;top:577px;width:1px;height:55px;background:#c4c4d0"></div>
<div style="position:absolute;left:244px;top:577px;width:1px;height:55px;background:#c4c4d0"></div>
<div style="position:absolute;left:310px;top:577px;width:1px;height:55px;background:#c4c4d0"></div>
<div style="position:absolute;left:376px;top:577px;width:1px;height:55px;background:#c4c4d0"></div>
<div style="position:absolute;left:398px;top:577px;width:1px;height:55px;background:#c4c4d0"></div>
<div style="position:absolute;left:442px;top:577px;width:1px;height:55px;background:#c4c4d0"></div>
<div style="position:absolute;left:486px;top:577px;width:1px;height:55px;background:#c4c4d0"></div>
<div style="position:absolute;left:530px;top:577px;width:1px;height:55px;background:#a8a8a4"></div>
<div style="position:absolute;left:21px;top:561px;width:1px;height:72px;background:#716f64"></div>
<div style="position:absolute;left:36px;top:562px;width:32px;height:14px;font:11px 'Liberation Sans', sans-serif;color:#000;line-height:14px;text-align:center;box-sizing:border-box;">pal</div>
<div style="position:absolute;left:69px;top:562px;width:43px;height:14px;font:11px 'Liberation Sans', sans-serif;color:#000;line-height:14px;text-align:right;box-sizing:border-box;padding-right:2px">x</div>
<div style="position:absolute;left:113px;top:562px;width:43px;height:14px;font:11px 'Liberation Sans', sans-serif;color:#000;line-height:14px;text-align:right;box-sizing:border-box;padding-right:2px">y</div>
<div style="position:absolute;left:157px;top:562px;width:43px;height:14px;font:11px 'Liberation Sans', sans-serif;color:#000;line-height:14px;text-align:right;box-sizing:border-box;padding-right:2px">d</div>
<div style="position:absolute;left:201px;top:562px;width:43px;height:14px;font:11px 'Liberation Sans', sans-serif;color:#000;line-height:14px;text-align:right;box-sizing:border-box;padding-right:2px">l</div>
<div style="position:absolute;left:245px;top:562px;width:65px;height:14px;font:11px 'Liberation Sans', sans-serif;color:#000;line-height:14px;text-align:right;box-sizing:border-box;padding-right:2px">cls</div>
<div style="position:absolute;left:311px;top:562px;width:65px;height:14px;font:11px 'Liberation Sans', sans-serif;color:#000;line-height:14px;text-align:right;box-sizing:border-box;padding-right:2px">fer</div>
<div style="position:absolute;left:377px;top:562px;width:21px;height:14px;font:11px 'Liberation Sans', sans-serif;color:#000;line-height:14px;text-align:center;box-sizing:border-box;"><span style="font-size:9px;position:relative;top:-2px">*</span></div>
<div style="position:absolute;left:399px;top:562px;width:43px;height:14px;font:11px 'Liberation Sans', sans-serif;color:#000;line-height:14px;text-align:right;box-sizing:border-box;padding-right:2px">Qd+</div>
<div style="position:absolute;left:443px;top:562px;width:43px;height:14px;font:11px 'Liberation Sans', sans-serif;color:#000;line-height:14px;text-align:right;box-sizing:border-box;padding-right:2px">Qd-</div>
<div style="position:absolute;left:487px;top:562px;width:43px;height:14px;font:11px 'Liberation Sans', sans-serif;color:#000;line-height:14px;text-align:left;box-sizing:border-box;padding-left:3px">pqp</div>
<div style="position:absolute;left:36px;top:578px;width:32px;height:13px;font:11px 'Liberation Sans', sans-serif;color:#000;line-height:13px;text-align:center;box-sizing:border-box;;white-space:nowrap">1</div>
<div style="position:absolute;left:69px;top:578px;width:43px;height:13px;font:11px 'Liberation Sans', sans-serif;color:#000;line-height:13px;text-align:right;box-sizing:border-box;padding-right:0px;white-space:nowrap">50,0</div>
<div style="position:absolute;left:113px;top:578px;width:43px;height:13px;font:11px 'Liberation Sans', sans-serif;color:#000;line-height:13px;text-align:right;box-sizing:border-box;padding-right:0px;white-space:nowrap">20,0</div>
<div style="position:absolute;left:157px;top:578px;width:43px;height:13px;font:11px 'Liberation Sans', sans-serif;color:#000;line-height:13px;text-align:right;box-sizing:border-box;padding-right:0px;white-space:nowrap">80</div>
<div style="position:absolute;left:201px;top:578px;width:43px;height:13px;font:11px 'Liberation Sans', sans-serif;color:#000;line-height:13px;text-align:right;box-sizing:border-box;padding-right:0px;white-space:nowrap">2000</div>
<div style="position:absolute;left:296px;top:577px;width:14px;height:13px;background:linear-gradient(90deg,rgba(236,233,216,0) 0%,#ece9d8 40%)"><div style="position:absolute;left:4px;top:7px;width:0;height:0;border-left:3px solid transparent;border-right:3px solid transparent;border-top:3px solid #000"></div></div>
<div style="position:absolute;left:245px;top:578px;width:51px;height:13px;font:11px 'Liberation Sans', sans-serif;color:#000;line-height:13px;text-align:right;box-sizing:border-box;padding-right:2px;white-space:nowrap">Rck250</div>
<div style="position:absolute;left:362px;top:577px;width:14px;height:13px;background:linear-gradient(90deg,rgba(236,233,216,0) 0%,#ece9d8 40%)"><div style="position:absolute;left:4px;top:7px;width:0;height:0;border-left:3px solid transparent;border-right:3px solid transparent;border-top:3px solid #000"></div></div>
<div style="position:absolute;left:311px;top:578px;width:51px;height:13px;font:11px 'Liberation Sans', sans-serif;color:#000;line-height:13px;text-align:right;box-sizing:border-box;padding-right:2px;white-space:nowrap">FeB44K</div>
<div style="position:absolute;left:381px;top:578px;width:12px;height:12px;background:#fff;border-top:2px solid #6a6a64;border-left:2px solid #6a6a64;border-right:1px solid #f0f0e8;border-bottom:1px solid #f0f0e8;box-sizing:border-box"></div>
<div style="position:absolute;left:399px;top:578px;width:43px;height:13px;font:11px 'Liberation Sans', sans-serif;color:#000;line-height:13px;text-align:right;box-sizing:border-box;padding-right:0px;white-space:nowrap"></div>
<div style="position:absolute;left:443px;top:578px;width:43px;height:13px;font:11px 'Liberation Sans', sans-serif;color:#000;line-height:13px;text-align:right;box-sizing:border-box;padding-right:0px;white-space:nowrap"></div>
<div style="position:absolute;left:516px;top:577px;width:14px;height:13px;background:linear-gradient(90deg,rgba(236,233,216,0) 0%,#ece9d8 40%)"><div style="position:absolute;left:4px;top:7px;width:0;height:0;border-left:3px solid transparent;border-right:3px solid transparent;border-top:3px solid #000"></div></div>
<div style="position:absolute;left:487px;top:578px;width:29px;height:13px;font:11px 'Liberation Sans', sans-serif;color:#000;line-height:13px;text-align:left;box-sizing:border-box;padding-left:3px;white-space:nowrap">8H</div>
<div style="position:absolute;left:36px;top:592px;width:32px;height:13px;font:11px 'Liberation Sans', sans-serif;color:#000;line-height:13px;text-align:center;box-sizing:border-box;;white-space:nowrap">2</div>
<div style="position:absolute;left:69px;top:592px;width:43px;height:13px;font:11px 'Liberation Sans', sans-serif;color:#000;line-height:13px;text-align:right;box-sizing:border-box;padding-right:0px;white-space:nowrap">450,0</div>
<div style="position:absolute;left:113px;top:592px;width:43px;height:13px;font:11px 'Liberation Sans', sans-serif;color:#000;line-height:13px;text-align:right;box-sizing:border-box;padding-right:0px;white-space:nowrap">20,0</div>
<div style="position:absolute;left:157px;top:592px;width:43px;height:13px;font:11px 'Liberation Sans', sans-serif;color:#000;line-height:13px;text-align:right;box-sizing:border-box;padding-right:0px;white-space:nowrap">80</div>
<div style="position:absolute;left:201px;top:592px;width:43px;height:13px;font:11px 'Liberation Sans', sans-serif;color:#000;line-height:13px;text-align:right;box-sizing:border-box;padding-right:0px;white-space:nowrap">2000</div>
<div style="position:absolute;left:296px;top:591px;width:14px;height:13px;background:linear-gradient(90deg,rgba(236,233,216,0) 0%,#ece9d8 40%)"><div style="position:absolute;left:4px;top:7px;width:0;height:0;border-left:3px solid transparent;border-right:3px solid transparent;border-top:3px solid #000"></div></div>
<div style="position:absolute;left:245px;top:592px;width:51px;height:13px;font:11px 'Liberation Sans', sans-serif;color:#000;line-height:13px;text-align:right;box-sizing:border-box;padding-right:2px;white-space:nowrap">Rck250</div>
<div style="position:absolute;left:362px;top:591px;width:14px;height:13px;background:linear-gradient(90deg,rgba(236,233,216,0) 0%,#ece9d8 40%)"><div style="position:absolute;left:4px;top:7px;width:0;height:0;border-left:3px solid transparent;border-right:3px solid transparent;border-top:3px solid #000"></div></div>
<div style="position:absolute;left:311px;top:592px;width:51px;height:13px;font:11px 'Liberation Sans', sans-serif;color:#000;line-height:13px;text-align:right;box-sizing:border-box;padding-right:2px;white-space:nowrap">FeB44K</div>
<div style="position:absolute;left:381px;top:592px;width:12px;height:12px;background:#fff;border-top:2px solid #6a6a64;border-left:2px solid #6a6a64;border-right:1px solid #f0f0e8;border-bottom:1px solid #f0f0e8;box-sizing:border-box"></div>
<div style="position:absolute;left:399px;top:592px;width:43px;height:13px;font:11px 'Liberation Sans', sans-serif;color:#000;line-height:13px;text-align:right;box-sizing:border-box;padding-right:0px;white-space:nowrap"></div>
<div style="position:absolute;left:443px;top:592px;width:43px;height:13px;font:11px 'Liberation Sans', sans-serif;color:#000;line-height:13px;text-align:right;box-sizing:border-box;padding-right:0px;white-space:nowrap"></div>
<div style="position:absolute;left:516px;top:591px;width:14px;height:13px;background:linear-gradient(90deg,rgba(236,233,216,0) 0%,#ece9d8 40%)"><div style="position:absolute;left:4px;top:7px;width:0;height:0;border-left:3px solid transparent;border-right:3px solid transparent;border-top:3px solid #000"></div></div>
<div style="position:absolute;left:487px;top:592px;width:29px;height:13px;font:11px 'Liberation Sans', sans-serif;color:#000;line-height:13px;text-align:left;box-sizing:border-box;padding-left:3px;white-space:nowrap">8H</div>
<div style="position:absolute;left:36px;top:606px;width:32px;height:13px;font:11px 'Liberation Sans', sans-serif;color:#000;line-height:13px;text-align:center;box-sizing:border-box;;white-space:nowrap">3</div>
<div style="position:absolute;left:69px;top:606px;width:43px;height:13px;font:11px 'Liberation Sans', sans-serif;color:#000;line-height:13px;text-align:right;box-sizing:border-box;padding-right:0px;white-space:nowrap">50,0</div>
<div style="position:absolute;left:113px;top:606px;width:43px;height:13px;font:11px 'Liberation Sans', sans-serif;color:#000;line-height:13px;text-align:right;box-sizing:border-box;padding-right:0px;white-space:nowrap">380,0</div>
<div style="position:absolute;left:157px;top:606px;width:43px;height:13px;font:11px 'Liberation Sans', sans-serif;color:#000;line-height:13px;text-align:right;box-sizing:border-box;padding-right:0px;white-space:nowrap">80</div>
<div style="position:absolute;left:201px;top:606px;width:43px;height:13px;font:11px 'Liberation Sans', sans-serif;color:#000;line-height:13px;text-align:right;box-sizing:border-box;padding-right:0px;white-space:nowrap">2000</div>
<div style="position:absolute;left:296px;top:605px;width:14px;height:13px;background:linear-gradient(90deg,rgba(236,233,216,0) 0%,#ece9d8 40%)"><div style="position:absolute;left:4px;top:7px;width:0;height:0;border-left:3px solid transparent;border-right:3px solid transparent;border-top:3px solid #000"></div></div>
<div style="position:absolute;left:245px;top:606px;width:51px;height:13px;font:11px 'Liberation Sans', sans-serif;color:#000;line-height:13px;text-align:right;box-sizing:border-box;padding-right:2px;white-space:nowrap">Rck250</div>
<div style="position:absolute;left:362px;top:605px;width:14px;height:13px;background:linear-gradient(90deg,rgba(236,233,216,0) 0%,#ece9d8 40%)"><div style="position:absolute;left:4px;top:7px;width:0;height:0;border-left:3px solid transparent;border-right:3px solid transparent;border-top:3px solid #000"></div></div>
<div style="position:absolute;left:311px;top:606px;width:51px;height:13px;font:11px 'Liberation Sans', sans-serif;color:#000;line-height:13px;text-align:right;box-sizing:border-box;padding-right:2px;white-space:nowrap">FeB44K</div>
<div style="position:absolute;left:381px;top:606px;width:12px;height:12px;background:#fff;border-top:2px solid #6a6a64;border-left:2px solid #6a6a64;border-right:1px solid #f0f0e8;border-bottom:1px solid #f0f0e8;box-sizing:border-box"></div>
<div style="position:absolute;left:399px;top:606px;width:43px;height:13px;font:11px 'Liberation Sans', sans-serif;color:#000;line-height:13px;text-align:right;box-sizing:border-box;padding-right:0px;white-space:nowrap"></div>
<div style="position:absolute;left:443px;top:606px;width:43px;height:13px;font:11px 'Liberation Sans', sans-serif;color:#000;line-height:13px;text-align:right;box-sizing:border-box;padding-right:0px;white-space:nowrap"></div>
<div style="position:absolute;left:516px;top:605px;width:14px;height:13px;background:linear-gradient(90deg,rgba(236,233,216,0) 0%,#ece9d8 40%)"><div style="position:absolute;left:4px;top:7px;width:0;height:0;border-left:3px solid transparent;border-right:3px solid transparent;border-top:3px solid #000"></div></div>
<div style="position:absolute;left:487px;top:606px;width:29px;height:13px;font:11px 'Liberation Sans', sans-serif;color:#000;line-height:13px;text-align:left;box-sizing:border-box;padding-left:3px;white-space:nowrap">8H</div>
<div style="position:absolute;left:36px;top:620px;width:32px;height:13px;font:11px 'Liberation Sans', sans-serif;color:#000;line-height:13px;text-align:center;box-sizing:border-box;;white-space:nowrap">4</div>
<div style="position:absolute;left:69px;top:620px;width:43px;height:13px;font:11px 'Liberation Sans', sans-serif;color:#000;line-height:13px;text-align:right;box-sizing:border-box;padding-right:0px;white-space:nowrap">450,0</div>
<div style="position:absolute;left:113px;top:620px;width:43px;height:13px;font:11px 'Liberation Sans', sans-serif;color:#000;line-height:13px;text-align:right;box-sizing:border-box;padding-right:0px;white-space:nowrap">380,0</div>
<div style="position:absolute;left:157px;top:620px;width:43px;height:13px;font:11px 'Liberation Sans', sans-serif;color:#000;line-height:13px;text-align:right;box-sizing:border-box;padding-right:0px;white-space:nowrap">80</div>
<div style="position:absolute;left:201px;top:620px;width:43px;height:13px;font:11px 'Liberation Sans', sans-serif;color:#000;line-height:13px;text-align:right;box-sizing:border-box;padding-right:0px;white-space:nowrap">2000</div>
<div style="position:absolute;left:296px;top:619px;width:14px;height:13px;background:linear-gradient(90deg,rgba(236,233,216,0) 0%,#ece9d8 40%)"><div style="position:absolute;left:4px;top:7px;width:0;height:0;border-left:3px solid transparent;border-right:3px solid transparent;border-top:3px solid #000"></div></div>
<div style="position:absolute;left:256px;top:619px;width:38px;height:13px;background:#2f5fb8"></div>
<div style="position:absolute;left:245px;top:620px;width:51px;height:13px;font:11px 'Liberation Sans', sans-serif;color:#000;line-height:13px;text-align:right;box-sizing:border-box;padding-right:2px;white-space:nowrap"><span style="color:#fff">Rck250</span></div>
<div style="position:absolute;left:362px;top:619px;width:14px;height:13px;background:linear-gradient(90deg,rgba(236,233,216,0) 0%,#ece9d8 40%)"><div style="position:absolute;left:4px;top:7px;width:0;height:0;border-left:3px solid transparent;border-right:3px solid transparent;border-top:3px solid #000"></div></div>
<div style="position:absolute;left:311px;top:620px;width:51px;height:13px;font:11px 'Liberation Sans', sans-serif;color:#000;line-height:13px;text-align:right;box-sizing:border-box;padding-right:2px;white-space:nowrap">FeB44K</div>
<div style="position:absolute;left:381px;top:620px;width:12px;height:12px;background:#fff;border-top:2px solid #6a6a64;border-left:2px solid #6a6a64;border-right:1px solid #f0f0e8;border-bottom:1px solid #f0f0e8;box-sizing:border-box"></div>
<div style="position:absolute;left:399px;top:620px;width:43px;height:13px;font:11px 'Liberation Sans', sans-serif;color:#000;line-height:13px;text-align:right;box-sizing:border-box;padding-right:0px;white-space:nowrap"></div>
<div style="position:absolute;left:443px;top:620px;width:43px;height:13px;font:11px 'Liberation Sans', sans-serif;color:#000;line-height:13px;text-align:right;box-sizing:border-box;padding-right:0px;white-space:nowrap"></div>
<div style="position:absolute;left:516px;top:619px;width:14px;height:13px;background:linear-gradient(90deg,rgba(236,233,216,0) 0%,#ece9d8 40%)"><div style="position:absolute;left:4px;top:7px;width:0;height:0;border-left:3px solid transparent;border-right:3px solid transparent;border-top:3px solid #000"></div></div>
<div style="position:absolute;left:487px;top:620px;width:29px;height:13px;font:11px 'Liberation Sans', sans-serif;color:#000;line-height:13px;text-align:left;box-sizing:border-box;padding-left:3px;white-space:nowrap">8H</div>
<svg style="position:absolute;left:23px;top:619px" width="12" height="13"><path d="M3 11 L9 2 L11 3.5 L5 12 Z" fill="#fff" stroke="#000" stroke-width="1"/><path d="M1 12 L3 12" stroke="#000"/></svg>
</body></html>
